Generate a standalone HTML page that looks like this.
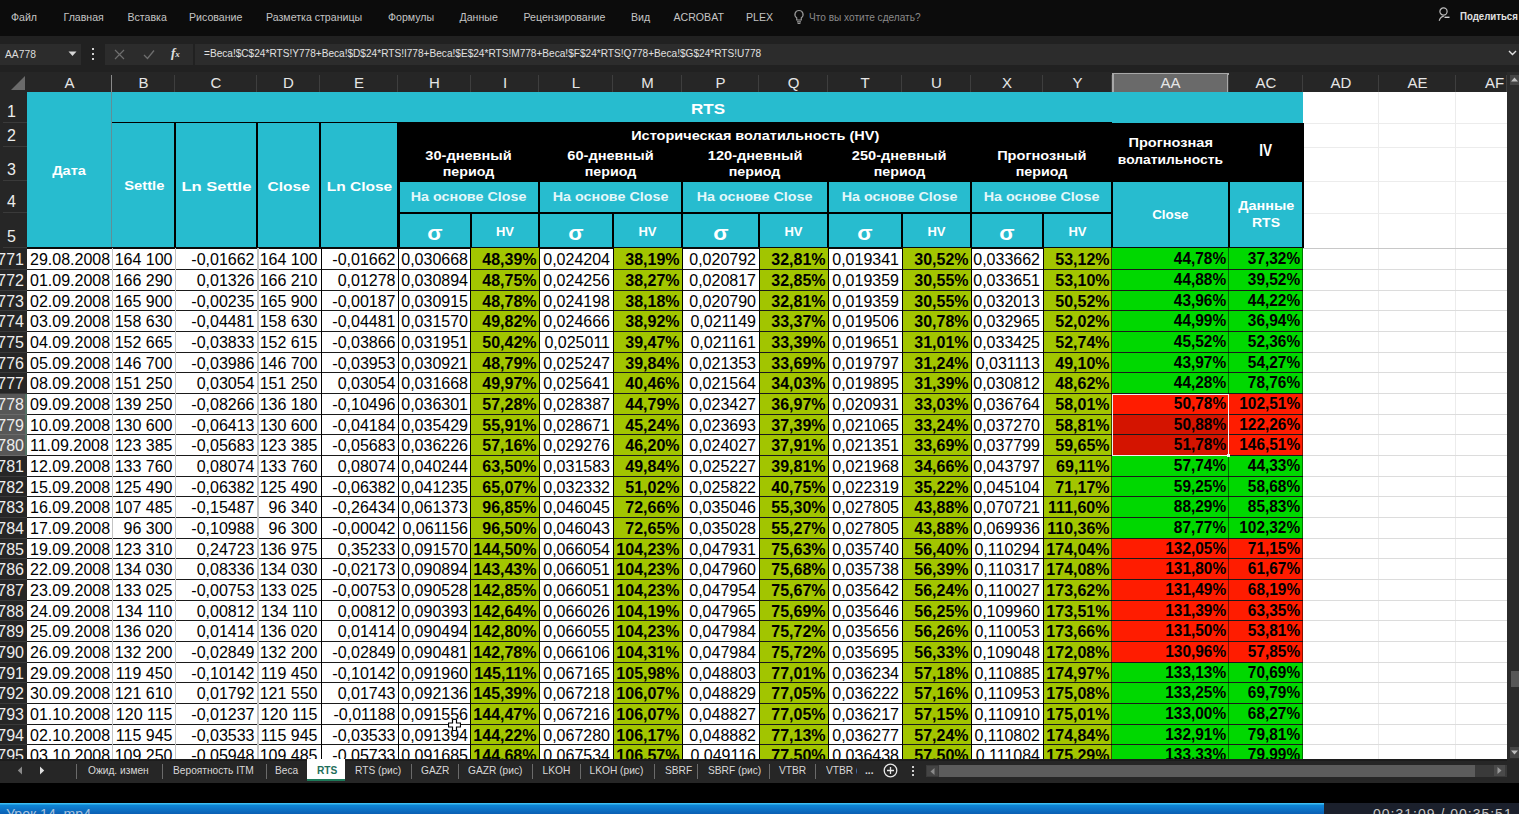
<!DOCTYPE html><html><head><meta charset="utf-8"><style>
*{margin:0;padding:0}
html,body{width:1519px;height:814px;overflow:hidden;background:#000}
body{position:relative;font-family:"Liberation Sans",sans-serif}
.a{position:absolute}
.mt{font-size:10.6px;color:#c4c4c4;white-space:nowrap}
.ch{font-size:15px;color:#e6e6e6;text-align:center;line-height:19px}
.rh{font-size:15px;color:#ececec;text-align:center;white-space:nowrap}
.hd{color:#fff;font-weight:bold;text-align:center;white-space:nowrap}
.dt{font-size:16px;color:#000;white-space:nowrap;overflow:hidden}
.b{font-weight:bold}
.tb{font-size:10.2px;color:#d8d8d8;white-space:nowrap}
</style></head><body><div class="a" style="left:0;top:0;width:1519px;height:36px;background:#0c0c0c"></div>
<div class="a mt" style="left:11px;top:11px">Файл</div>
<div class="a mt" style="left:63.5px;top:11px">Главная</div>
<div class="a mt" style="left:127.5px;top:11px">Вставка</div>
<div class="a mt" style="left:189px;top:11px">Рисование</div>
<div class="a mt" style="left:266px;top:11px">Разметка страницы</div>
<div class="a mt" style="left:388px;top:11px">Формулы</div>
<div class="a mt" style="left:459.5px;top:11px">Данные</div>
<div class="a mt" style="left:523.5px;top:11px">Рецензирование</div>
<div class="a mt" style="left:631px;top:11px">Вид</div>
<div class="a mt" style="left:673.5px;top:11px">ACROBAT</div>
<div class="a mt" style="left:746px;top:11px">PLEX</div>
<div class="a mt" style="left:809px;top:12px;color:#8a8a8a;font-size:10.1px">Что вы хотите сделать?</div>
<svg class="a" style="left:793px;top:9px" width="12" height="16" viewBox="0 0 12 16"><path d="M6 1.5a4 4 0 0 0-2.3 7.3V11h4.6V8.8A4 4 0 0 0 6 1.5z" fill="none" stroke="#9a9a9a" stroke-width="1.2"/><path d="M4 12.8h4M4.6 14.5h2.8" stroke="#9a9a9a" stroke-width="1.2"/></svg>
<svg class="a" style="left:1438px;top:6px" width="14" height="18" viewBox="0 0 14 18"><circle cx="5.5" cy="5.5" r="3.6" fill="none" stroke="#bdbdbd" stroke-width="1.2"/><path d="M1.2 14.8c0.8-2.6 2.6-4.4 4.6-4.4" fill="none" stroke="#bdbdbd" stroke-width="1.2"/><path d="M6.5 11.3h5" stroke="#d0d0d0" stroke-width="1.4"/></svg>
<div class="a mt" style="left:1460px;top:9.5px;color:#e0e0e0;font-size:10.6px;font-weight:bold;transform:scaleX(0.91);transform-origin:0 0">Поделиться</div>
<div class="a" style="left:0;top:36px;width:1519px;height:36px;background:#212121"></div>
<div class="a" style="left:0px;top:44px;width:81px;height:21px;background:#2c2c2c"></div>
<div class="a" style="left:5px;top:48.5px;font-size:10.3px;color:#dcdcdc">AA778</div>
<svg class="a" style="left:68px;top:51px" width="9" height="6" viewBox="0 0 9 6"><path d="M0.5 0.5h8L4.5 5z" fill="#d8d8d8"/></svg>
<div class="a" style="left:92px;top:48px;width:2px;height:2px;background:#cfcfcf;box-shadow:0 5px 0 #cfcfcf,0 10px 0 #cfcfcf"></div>
<div class="a" style="left:105px;top:44px;width:88px;height:21px;background:#2c2c2c"></div>
<svg class="a" style="left:114px;top:49px" width="11" height="11" viewBox="0 0 11 11"><path d="M1 1l9 9M10 1l-9 9" stroke="#6e6e6e" stroke-width="1.2"/></svg>
<svg class="a" style="left:143px;top:49px" width="12" height="11" viewBox="0 0 12 11"><path d="M1 6l3.5 3.5L11 1.5" fill="none" stroke="#6e6e6e" stroke-width="1.3"/></svg>
<div class="a" style="left:171px;top:45px;font-family:'Liberation Serif',serif;font-style:italic;font-weight:bold;font-size:13px;color:#e0e0e0">f<span style="font-size:9px">x</span></div>
<div class="a" style="left:195px;top:44px;width:1324px;height:21px;background:#2c2c2c"></div>
<div class="a" style="left:204px;top:48px;font-size:10.1px;color:#e0e0e0;white-space:nowrap">=Веса!$C$24*RTS!Y778+Веса!$D$24*RTS!I778+Веса!$E$24*RTS!M778+Веса!$F$24*RTS!Q778+Веса!$G$24*RTS!U778</div>
<svg class="a" style="left:1508px;top:50px" width="9" height="6" viewBox="0 0 9 6"><path d="M1 1l3.5 3.5L8 1" fill="none" stroke="#e0e0e0" stroke-width="1.4"/></svg>
<div class="a" style="left:0px;top:72px;width:1519px;height:20px;background:#262626"></div>
<div class="a ch" style="left:27px;top:73px;width:85px">A</div>
<div class="a" style="left:111px;top:75px;width:1px;height:17px;background:#8a8a8a"></div>
<div class="a ch" style="left:112px;top:73px;width:63px">B</div>
<div class="a" style="left:174px;top:75px;width:1px;height:17px;background:#3e3e3e"></div>
<div class="a ch" style="left:175px;top:73px;width:82px">C</div>
<div class="a" style="left:256px;top:75px;width:1px;height:17px;background:#3e3e3e"></div>
<div class="a ch" style="left:257px;top:73px;width:63px">D</div>
<div class="a" style="left:319px;top:75px;width:1px;height:17px;background:#3e3e3e"></div>
<div class="a ch" style="left:320px;top:73px;width:78px">E</div>
<div class="a" style="left:397px;top:75px;width:1px;height:17px;background:#3e3e3e"></div>
<div class="a ch" style="left:398px;top:73px;width:73px">H</div>
<div class="a" style="left:470px;top:75px;width:1px;height:17px;background:#3e3e3e"></div>
<div class="a ch" style="left:471px;top:73px;width:68px">I</div>
<div class="a" style="left:538px;top:75px;width:1px;height:17px;background:#3e3e3e"></div>
<div class="a ch" style="left:539px;top:73px;width:74px">L</div>
<div class="a" style="left:612px;top:75px;width:1px;height:17px;background:#3e3e3e"></div>
<div class="a ch" style="left:613px;top:73px;width:69px">M</div>
<div class="a" style="left:681px;top:75px;width:1px;height:17px;background:#3e3e3e"></div>
<div class="a ch" style="left:682px;top:73px;width:77px">P</div>
<div class="a" style="left:758px;top:75px;width:1px;height:17px;background:#3e3e3e"></div>
<div class="a ch" style="left:759px;top:73px;width:69px">Q</div>
<div class="a" style="left:827px;top:75px;width:1px;height:17px;background:#3e3e3e"></div>
<div class="a ch" style="left:828px;top:73px;width:74px">T</div>
<div class="a" style="left:901px;top:75px;width:1px;height:17px;background:#3e3e3e"></div>
<div class="a ch" style="left:902px;top:73px;width:69px">U</div>
<div class="a" style="left:970px;top:75px;width:1px;height:17px;background:#3e3e3e"></div>
<div class="a ch" style="left:971px;top:73px;width:72px">X</div>
<div class="a" style="left:1042px;top:75px;width:1px;height:17px;background:#3e3e3e"></div>
<div class="a ch" style="left:1043px;top:73px;width:69px">Y</div>
<div class="a" style="left:1111px;top:75px;width:1px;height:17px;background:#3e3e3e"></div>
<div class="a" style="left:1112px;top:73px;width:117px;height:19px;background:#6a6a6a;box-shadow:inset 2px 0 0 #a8a8a8,inset -2px 0 0 #a8a8a8,inset 0 1px 0 #a8a8a8"></div>
<div class="a ch" style="left:1112px;top:73px;width:117px">AA</div>
<div class="a" style="left:1228px;top:75px;width:1px;height:17px;background:#3e3e3e"></div>
<div class="a ch" style="left:1229px;top:73px;width:74px">AC</div>
<div class="a" style="left:1302px;top:75px;width:1px;height:17px;background:#3e3e3e"></div>
<div class="a ch" style="left:1303px;top:73px;width:76px">AD</div>
<div class="a" style="left:1378px;top:75px;width:1px;height:17px;background:#3e3e3e"></div>
<div class="a ch" style="left:1379px;top:73px;width:77px">AE</div>
<div class="a" style="left:1455px;top:75px;width:1px;height:17px;background:#3e3e3e"></div>
<div class="a ch" style="left:1456px;top:73px;width:77px">AF</div>
<div class="a" style="left:1506px;top:75px;width:1px;height:17px;background:#3e3e3e"></div>
<svg class="a" style="left:11px;top:76px" width="14" height="14" viewBox="0 0 14 14"><path d="M14 0V14H0z" fill="#6a6a6a"/></svg>
<div class="a" style="left:0px;top:92px;width:27px;height:667px;background:#262626"></div>
<div class="a rh" style="left:-1px;top:101.5px;width:25px;height:20px;line-height:20px;font-size:16px">1</div>
<div class="a" style="left:3px;top:122px;width:24px;height:1px;background:#3a3a3a"></div>
<div class="a rh" style="left:-1px;top:125.5px;width:25px;height:20px;line-height:20px;font-size:16px">2</div>
<div class="a" style="left:3px;top:146px;width:24px;height:1px;background:#3a3a3a"></div>
<div class="a rh" style="left:-1px;top:159.5px;width:25px;height:20px;line-height:20px;font-size:16px">3</div>
<div class="a" style="left:3px;top:180px;width:24px;height:1px;background:#3a3a3a"></div>
<div class="a rh" style="left:-1px;top:191.5px;width:25px;height:20px;line-height:20px;font-size:16px">4</div>
<div class="a" style="left:3px;top:212px;width:24px;height:1px;background:#3a3a3a"></div>
<div class="a rh" style="left:-1px;top:226.5px;width:25px;height:20px;line-height:20px;font-size:16px">5</div>
<div class="a" style="left:3px;top:247px;width:24px;height:1px;background:#3a3a3a"></div>
<div class="a" style="left:0px;top:393.09px;width:27px;height:62.01px;background:#575757"></div>
<div class="a" style="left:25px;top:393.09px;width:2px;height:62.01px;background:#4f6f62"></div>
<div class="a rh" style="left:-9px;top:250.30px;width:33px;height:20.67px;line-height:20.67px;text-align:right;font-size:16px">771</div>
<div class="a" style="left:0;top:269.07px;width:27px;height:1px;background:#3a3a3a"></div>
<div class="a rh" style="left:-9px;top:270.97px;width:33px;height:20.67px;line-height:20.67px;text-align:right;font-size:16px">772</div>
<div class="a" style="left:0;top:289.74px;width:27px;height:1px;background:#3a3a3a"></div>
<div class="a rh" style="left:-9px;top:291.63px;width:33px;height:20.67px;line-height:20.67px;text-align:right;font-size:16px">773</div>
<div class="a" style="left:0;top:310.41px;width:27px;height:1px;background:#3a3a3a"></div>
<div class="a rh" style="left:-9px;top:312.30px;width:33px;height:20.67px;line-height:20.67px;text-align:right;font-size:16px">774</div>
<div class="a" style="left:0;top:331.08px;width:27px;height:1px;background:#3a3a3a"></div>
<div class="a rh" style="left:-9px;top:332.96px;width:33px;height:20.67px;line-height:20.67px;text-align:right;font-size:16px">775</div>
<div class="a" style="left:0;top:351.75px;width:27px;height:1px;background:#3a3a3a"></div>
<div class="a rh" style="left:-9px;top:353.62px;width:33px;height:20.67px;line-height:20.67px;text-align:right;font-size:16px">776</div>
<div class="a" style="left:0;top:372.42px;width:27px;height:1px;background:#3a3a3a"></div>
<div class="a rh" style="left:-9px;top:374.29px;width:33px;height:20.67px;line-height:20.67px;text-align:right;font-size:16px">777</div>
<div class="a" style="left:0;top:393.09px;width:27px;height:1px;background:#3a3a3a"></div>
<div class="a rh" style="left:-9px;top:394.96px;width:33px;height:20.67px;line-height:20.67px;text-align:right;font-size:16px">778</div>
<div class="a" style="left:0;top:413.76px;width:27px;height:1px;background:#6a6a6a"></div>
<div class="a rh" style="left:-9px;top:415.62px;width:33px;height:20.67px;line-height:20.67px;text-align:right;font-size:16px">779</div>
<div class="a" style="left:0;top:434.43px;width:27px;height:1px;background:#6a6a6a"></div>
<div class="a rh" style="left:-9px;top:436.28px;width:33px;height:20.67px;line-height:20.67px;text-align:right;font-size:16px">780</div>
<div class="a" style="left:0;top:455.10px;width:27px;height:1px;background:#6a6a6a"></div>
<div class="a rh" style="left:-9px;top:456.95px;width:33px;height:20.67px;line-height:20.67px;text-align:right;font-size:16px">781</div>
<div class="a" style="left:0;top:475.77px;width:27px;height:1px;background:#3a3a3a"></div>
<div class="a rh" style="left:-9px;top:477.62px;width:33px;height:20.67px;line-height:20.67px;text-align:right;font-size:16px">782</div>
<div class="a" style="left:0;top:496.44px;width:27px;height:1px;background:#3a3a3a"></div>
<div class="a rh" style="left:-9px;top:498.28px;width:33px;height:20.67px;line-height:20.67px;text-align:right;font-size:16px">783</div>
<div class="a" style="left:0;top:517.11px;width:27px;height:1px;background:#3a3a3a"></div>
<div class="a rh" style="left:-9px;top:518.94px;width:33px;height:20.67px;line-height:20.67px;text-align:right;font-size:16px">784</div>
<div class="a" style="left:0;top:537.78px;width:27px;height:1px;background:#3a3a3a"></div>
<div class="a rh" style="left:-9px;top:539.61px;width:33px;height:20.67px;line-height:20.67px;text-align:right;font-size:16px">785</div>
<div class="a" style="left:0;top:558.45px;width:27px;height:1px;background:#3a3a3a"></div>
<div class="a rh" style="left:-9px;top:560.27px;width:33px;height:20.67px;line-height:20.67px;text-align:right;font-size:16px">786</div>
<div class="a" style="left:0;top:579.12px;width:27px;height:1px;background:#3a3a3a"></div>
<div class="a rh" style="left:-9px;top:580.94px;width:33px;height:20.67px;line-height:20.67px;text-align:right;font-size:16px">787</div>
<div class="a" style="left:0;top:599.79px;width:27px;height:1px;background:#3a3a3a"></div>
<div class="a rh" style="left:-9px;top:601.61px;width:33px;height:20.67px;line-height:20.67px;text-align:right;font-size:16px">788</div>
<div class="a" style="left:0;top:620.46px;width:27px;height:1px;background:#3a3a3a"></div>
<div class="a rh" style="left:-9px;top:622.27px;width:33px;height:20.67px;line-height:20.67px;text-align:right;font-size:16px">789</div>
<div class="a" style="left:0;top:641.13px;width:27px;height:1px;background:#3a3a3a"></div>
<div class="a rh" style="left:-9px;top:642.93px;width:33px;height:20.67px;line-height:20.67px;text-align:right;font-size:16px">790</div>
<div class="a" style="left:0;top:661.80px;width:27px;height:1px;background:#3a3a3a"></div>
<div class="a rh" style="left:-9px;top:663.60px;width:33px;height:20.67px;line-height:20.67px;text-align:right;font-size:16px">791</div>
<div class="a" style="left:0;top:682.47px;width:27px;height:1px;background:#3a3a3a"></div>
<div class="a rh" style="left:-9px;top:684.26px;width:33px;height:20.67px;line-height:20.67px;text-align:right;font-size:16px">792</div>
<div class="a" style="left:0;top:703.14px;width:27px;height:1px;background:#3a3a3a"></div>
<div class="a rh" style="left:-9px;top:704.93px;width:33px;height:20.67px;line-height:20.67px;text-align:right;font-size:16px">793</div>
<div class="a" style="left:0;top:723.81px;width:27px;height:1px;background:#3a3a3a"></div>
<div class="a rh" style="left:-9px;top:725.60px;width:33px;height:20.67px;line-height:20.67px;text-align:right;font-size:16px">794</div>
<div class="a" style="left:0;top:744.48px;width:27px;height:1px;background:#3a3a3a"></div>
<div class="a rh" style="left:-9px;top:746.26px;width:33px;height:20.67px;line-height:20.67px;text-align:right;font-size:16px">795</div>
<div class="a" style="left:0;top:765.15px;width:27px;height:1px;background:#3a3a3a"></div>
<div class="a" style="left:27px;top:92px;width:1480px;height:667px;background:#ffffff"></div>
<div class="a" style="left:1303px;top:122.5px;width:204px;height:1px;background:#ececec"></div>
<div class="a" style="left:1303px;top:146.5px;width:204px;height:1px;background:#ececec"></div>
<div class="a" style="left:1303px;top:180.5px;width:204px;height:1px;background:#ececec"></div>
<div class="a" style="left:1303px;top:213px;width:204px;height:1px;background:#ececec"></div>
<div class="a" style="left:1378px;top:92px;width:1px;height:667px;background:#ececec"></div>
<div class="a" style="left:1455px;top:92px;width:1px;height:667px;background:#ececec"></div>
<div class="a" style="left:1303px;top:269.07px;width:204px;height:1px;background:#dcdcdc"></div>
<div class="a" style="left:1303px;top:289.74px;width:204px;height:1px;background:#dcdcdc"></div>
<div class="a" style="left:1303px;top:310.41px;width:204px;height:1px;background:#dcdcdc"></div>
<div class="a" style="left:1303px;top:331.08px;width:204px;height:1px;background:#dcdcdc"></div>
<div class="a" style="left:1303px;top:351.75px;width:204px;height:1px;background:#dcdcdc"></div>
<div class="a" style="left:1303px;top:372.42px;width:204px;height:1px;background:#dcdcdc"></div>
<div class="a" style="left:1303px;top:393.09px;width:204px;height:1px;background:#dcdcdc"></div>
<div class="a" style="left:1303px;top:413.76px;width:204px;height:1px;background:#dcdcdc"></div>
<div class="a" style="left:1303px;top:434.43px;width:204px;height:1px;background:#dcdcdc"></div>
<div class="a" style="left:1303px;top:455.1px;width:204px;height:1px;background:#dcdcdc"></div>
<div class="a" style="left:1303px;top:475.77px;width:204px;height:1px;background:#dcdcdc"></div>
<div class="a" style="left:1303px;top:496.44px;width:204px;height:1px;background:#dcdcdc"></div>
<div class="a" style="left:1303px;top:517.11px;width:204px;height:1px;background:#dcdcdc"></div>
<div class="a" style="left:1303px;top:537.78px;width:204px;height:1px;background:#dcdcdc"></div>
<div class="a" style="left:1303px;top:558.45px;width:204px;height:1px;background:#dcdcdc"></div>
<div class="a" style="left:1303px;top:579.12px;width:204px;height:1px;background:#dcdcdc"></div>
<div class="a" style="left:1303px;top:599.79px;width:204px;height:1px;background:#dcdcdc"></div>
<div class="a" style="left:1303px;top:620.46px;width:204px;height:1px;background:#dcdcdc"></div>
<div class="a" style="left:1303px;top:641.13px;width:204px;height:1px;background:#dcdcdc"></div>
<div class="a" style="left:1303px;top:661.8px;width:204px;height:1px;background:#dcdcdc"></div>
<div class="a" style="left:1303px;top:682.47px;width:204px;height:1px;background:#dcdcdc"></div>
<div class="a" style="left:1303px;top:703.14px;width:204px;height:1px;background:#dcdcdc"></div>
<div class="a" style="left:1303px;top:723.81px;width:204px;height:1px;background:#dcdcdc"></div>
<div class="a" style="left:1303px;top:744.48px;width:204px;height:1px;background:#dcdcdc"></div>
<div class="a" style="left:1303px;top:765.15px;width:204px;height:1px;background:#dcdcdc"></div>
<div class="a" style="left:1303px;top:248px;width:204px;height:1px;background:#c8c8c8"></div>
<div class="a " style="left:27px;top:92px;width:1276px;height:156px;background:#27bccf;"></div>
<div class="a " style="left:398px;top:123px;width:905px;height:58px;background:#000;"></div>
<div class="a hd" style="left:-80.9px;top:164.00px;width:300px;font-size:13px;line-height:13px;color:#fff"><span style="display:inline-block;transform:scaleX(1.117)">Дата</span></div>
<div class="a hd" style="left:557.8px;top:100.50px;width:300px;font-size:15px;line-height:15px;color:#fff"><span style="display:inline-block;transform:scaleX(1.134)">RTS</span></div>
<div class="a hd" style="left:-5.699999999999989px;top:180.44px;width:300px;font-size:12px;line-height:12px;color:#fff"><span style="display:inline-block;transform:scaleX(1.227)">Settle</span></div>
<div class="a hd" style="left:66.6px;top:179.60px;width:300px;font-size:13px;line-height:13px;color:#fff"><span style="display:inline-block;transform:scaleX(1.275)">Ln Settle</span></div>
<div class="a hd" style="left:138.89999999999998px;top:179.60px;width:300px;font-size:13px;line-height:13px;color:#fff"><span style="display:inline-block;transform:scaleX(1.198)">Close</span></div>
<div class="a hd" style="left:209.5px;top:179.60px;width:300px;font-size:13px;line-height:13px;color:#fff"><span style="display:inline-block;transform:scaleX(1.193)">Ln Close</span></div>
<div class="a hd" style="left:605.5px;top:128.80px;width:300px;font-size:13px;line-height:13px;color:#fff"><span style="display:inline-block;transform:scaleX(1.115)">Историческая волатильность (HV)</span></div>
<div class="a hd" style="left:318.5px;top:149.20px;width:300px;font-size:13px;line-height:13px;color:#fff"><span style="display:inline-block;transform:scaleX(1.122)">30-дневный</span></div>
<div class="a hd" style="left:318.5px;top:165.30px;width:300px;font-size:13px;line-height:13px;color:#fff"><span style="display:inline-block;transform:scaleX(1.095)">период</span></div>
<div class="a hd" style="left:318.5px;top:190.40px;width:300px;font-size:13px;line-height:13px;color:#e4f7fa"><span style="display:inline-block;transform:scaleX(1.101)">На основе Close</span></div>
<div class="a hd" style="left:284.5px;top:222.57px;width:300px;font-size:20px;line-height:20px;color:#fff"><span style="display:inline-block;transform:scaleX(1.118)">σ</span></div>
<div class="a hd" style="left:355.0px;top:224.50px;width:300px;font-size:13px;line-height:13px;color:#fff"><span style="display:inline-block;transform:scaleX(1.0)">HV</span></div>
<div class="a hd" style="left:460.5px;top:149.20px;width:300px;font-size:13px;line-height:13px;color:#fff"><span style="display:inline-block;transform:scaleX(1.122)">60-дневный</span></div>
<div class="a hd" style="left:460.5px;top:165.30px;width:300px;font-size:13px;line-height:13px;color:#fff"><span style="display:inline-block;transform:scaleX(1.095)">период</span></div>
<div class="a hd" style="left:460.5px;top:190.40px;width:300px;font-size:13px;line-height:13px;color:#e4f7fa"><span style="display:inline-block;transform:scaleX(1.101)">На основе Close</span></div>
<div class="a hd" style="left:426.0px;top:222.57px;width:300px;font-size:20px;line-height:20px;color:#fff"><span style="display:inline-block;transform:scaleX(1.118)">σ</span></div>
<div class="a hd" style="left:497.5px;top:224.50px;width:300px;font-size:13px;line-height:13px;color:#fff"><span style="display:inline-block;transform:scaleX(1.0)">HV</span></div>
<div class="a hd" style="left:605.0px;top:149.20px;width:300px;font-size:13px;line-height:13px;color:#fff"><span style="display:inline-block;transform:scaleX(1.122)">120-дневный</span></div>
<div class="a hd" style="left:605.0px;top:165.30px;width:300px;font-size:13px;line-height:13px;color:#fff"><span style="display:inline-block;transform:scaleX(1.095)">период</span></div>
<div class="a hd" style="left:605.0px;top:190.40px;width:300px;font-size:13px;line-height:13px;color:#e4f7fa"><span style="display:inline-block;transform:scaleX(1.101)">На основе Close</span></div>
<div class="a hd" style="left:570.5px;top:222.57px;width:300px;font-size:20px;line-height:20px;color:#fff"><span style="display:inline-block;transform:scaleX(1.118)">σ</span></div>
<div class="a hd" style="left:643.5px;top:224.50px;width:300px;font-size:13px;line-height:13px;color:#fff"><span style="display:inline-block;transform:scaleX(1.0)">HV</span></div>
<div class="a hd" style="left:749.5px;top:149.20px;width:300px;font-size:13px;line-height:13px;color:#fff"><span style="display:inline-block;transform:scaleX(1.122)">250-дневный</span></div>
<div class="a hd" style="left:749.5px;top:165.30px;width:300px;font-size:13px;line-height:13px;color:#fff"><span style="display:inline-block;transform:scaleX(1.095)">период</span></div>
<div class="a hd" style="left:749.5px;top:190.40px;width:300px;font-size:13px;line-height:13px;color:#e4f7fa"><span style="display:inline-block;transform:scaleX(1.101)">На основе Close</span></div>
<div class="a hd" style="left:715.0px;top:222.57px;width:300px;font-size:20px;line-height:20px;color:#fff"><span style="display:inline-block;transform:scaleX(1.118)">σ</span></div>
<div class="a hd" style="left:786.5px;top:224.50px;width:300px;font-size:13px;line-height:13px;color:#fff"><span style="display:inline-block;transform:scaleX(1.0)">HV</span></div>
<div class="a hd" style="left:891.5px;top:149.20px;width:300px;font-size:13px;line-height:13px;color:#fff"><span style="display:inline-block;transform:scaleX(1.122)">Прогнозный</span></div>
<div class="a hd" style="left:891.5px;top:165.30px;width:300px;font-size:13px;line-height:13px;color:#fff"><span style="display:inline-block;transform:scaleX(1.095)">период</span></div>
<div class="a hd" style="left:891.5px;top:190.40px;width:300px;font-size:13px;line-height:13px;color:#e4f7fa"><span style="display:inline-block;transform:scaleX(1.101)">На основе Close</span></div>
<div class="a hd" style="left:857.0px;top:222.57px;width:300px;font-size:20px;line-height:20px;color:#fff"><span style="display:inline-block;transform:scaleX(1.118)">σ</span></div>
<div class="a hd" style="left:927.5px;top:224.50px;width:300px;font-size:13px;line-height:13px;color:#fff"><span style="display:inline-block;transform:scaleX(1.0)">HV</span></div>
<div class="a hd" style="left:1020.5px;top:136.30px;width:300px;font-size:13px;line-height:13px;color:#fff"><span style="display:inline-block;transform:scaleX(1.122)">Прогнозная</span></div>
<div class="a hd" style="left:1020.5px;top:152.60px;width:300px;font-size:13px;line-height:13px;color:#fff"><span style="display:inline-block;transform:scaleX(1.064)">волатильность</span></div>
<div class="a hd" style="left:1020.5px;top:208.54px;width:300px;font-size:12px;line-height:12px;color:#fff"><span style="display:inline-block;transform:scaleX(1.114)">Close</span></div>
<div class="a hd" style="left:1116.0px;top:143.16px;width:300px;font-size:16px;line-height:16px;color:#fff"><span style="display:inline-block;transform:scaleX(0.85)">IV</span></div>
<div class="a hd" style="left:1116.0px;top:199.30px;width:300px;font-size:13px;line-height:13px;color:#fff"><span style="display:inline-block;transform:scaleX(1.106)">Данные</span></div>
<div class="a hd" style="left:1116.0px;top:215.50px;width:300px;font-size:13px;line-height:13px;color:#fff"><span style="display:inline-block;transform:scaleX(1.077)">RTS</span></div>
<div class="a" style="left:112px;top:121.5px;width:1000px;height:1.6px;background:#000"></div>
<div class="a" style="left:1112px;top:123px;width:191px;height:1.6px;background:#000"></div>
<div class="a" style="left:111.3px;top:92px;width:1.2px;height:156px;background:#5f8f98"></div>
<div class="a" style="left:174px;top:123px;width:2px;height:125px;background:#000"></div>
<div class="a" style="left:256px;top:123px;width:2px;height:125px;background:#000"></div>
<div class="a" style="left:319px;top:123px;width:2px;height:125px;background:#000"></div>
<div class="a" style="left:397px;top:123px;width:2px;height:125px;background:#000"></div>
<div class="a" style="left:398px;top:123px;width:2px;height:125px;background:#000"></div>
<div class="a" style="left:398px;top:180px;width:714px;height:2px;background:#000"></div>
<div class="a" style="left:1112px;top:180px;width:191px;height:2px;background:#000"></div>
<div class="a" style="left:398px;top:212px;width:714px;height:2px;background:#000"></div>
<div class="a" style="left:538px;top:181px;width:2px;height:67px;background:#000"></div>
<div class="a" style="left:470px;top:213px;width:2px;height:35px;background:#000"></div>
<div class="a" style="left:681px;top:181px;width:2px;height:67px;background:#000"></div>
<div class="a" style="left:612px;top:213px;width:2px;height:35px;background:#000"></div>
<div class="a" style="left:827px;top:181px;width:2px;height:67px;background:#000"></div>
<div class="a" style="left:758px;top:213px;width:2px;height:35px;background:#000"></div>
<div class="a" style="left:970px;top:181px;width:2px;height:67px;background:#000"></div>
<div class="a" style="left:901px;top:213px;width:2px;height:35px;background:#000"></div>
<div class="a" style="left:1111px;top:181px;width:2px;height:67px;background:#000"></div>
<div class="a" style="left:1042px;top:213px;width:2px;height:35px;background:#000"></div>
<div class="a" style="left:1228px;top:181px;width:2px;height:67px;background:#000"></div>
<div class="a" style="left:1302px;top:123px;width:1.5px;height:125px;background:#000"></div>
<div class="a" style="left:27px;top:247px;width:1276px;height:2px;background:#0a0a0a"></div>
<div class="a dt" style="left:27px;top:250.30px;width:85px;height:20.67px;line-height:20.67px;text-align:left;padding-left:3px;box-sizing:border-box;">29.08.2008</div>
<div class="a dt" style="left:112px;top:250.30px;width:63px;height:20.67px;line-height:20.67px;text-align:right;padding-right:2.5px;box-sizing:border-box;">164 100</div>
<div class="a dt" style="left:175px;top:250.30px;width:82px;height:20.67px;line-height:20.67px;text-align:right;padding-right:2.5px;box-sizing:border-box;">-0,01662</div>
<div class="a dt" style="left:257px;top:250.30px;width:63px;height:20.67px;line-height:20.67px;text-align:right;padding-right:2.5px;box-sizing:border-box;">164 100</div>
<div class="a dt" style="left:320px;top:250.30px;width:78px;height:20.67px;line-height:20.67px;text-align:right;padding-right:2.5px;box-sizing:border-box;">-0,01662</div>
<div class="a dt" style="left:398px;top:250.30px;width:73px;height:20.67px;line-height:20.67px;text-align:right;padding-right:3px;box-sizing:border-box;">0,030668</div>
<div class="a" style="left:471px;top:248.40px;width:68px;height:20.67px;background:#a2c500"></div>
<div class="a dt b" style="left:471px;top:250.30px;width:68px;height:20.67px;line-height:20.67px;text-align:right;padding-right:2.5px;box-sizing:border-box;">48,39%</div>
<div class="a dt" style="left:539px;top:250.30px;width:74px;height:20.67px;line-height:20.67px;text-align:right;padding-right:3px;box-sizing:border-box;">0,024204</div>
<div class="a" style="left:613px;top:248.40px;width:69px;height:20.67px;background:#a2c500"></div>
<div class="a dt b" style="left:613px;top:250.30px;width:69px;height:20.67px;line-height:20.67px;text-align:right;padding-right:2.5px;box-sizing:border-box;">38,19%</div>
<div class="a dt" style="left:682px;top:250.30px;width:77px;height:20.67px;line-height:20.67px;text-align:right;padding-right:3px;box-sizing:border-box;">0,020792</div>
<div class="a" style="left:759px;top:248.40px;width:69px;height:20.67px;background:#a2c500"></div>
<div class="a dt b" style="left:759px;top:250.30px;width:69px;height:20.67px;line-height:20.67px;text-align:right;padding-right:2.5px;box-sizing:border-box;">32,81%</div>
<div class="a dt" style="left:828px;top:250.30px;width:74px;height:20.67px;line-height:20.67px;text-align:right;padding-right:3px;box-sizing:border-box;">0,019341</div>
<div class="a" style="left:902px;top:248.40px;width:69px;height:20.67px;background:#a2c500"></div>
<div class="a dt b" style="left:902px;top:250.30px;width:69px;height:20.67px;line-height:20.67px;text-align:right;padding-right:2.5px;box-sizing:border-box;">30,52%</div>
<div class="a dt" style="left:971px;top:250.30px;width:72px;height:20.67px;line-height:20.67px;text-align:right;padding-right:3px;box-sizing:border-box;">0,033662</div>
<div class="a" style="left:1043px;top:248.40px;width:69px;height:20.67px;background:#a2c500"></div>
<div class="a dt b" style="left:1043px;top:250.30px;width:69px;height:20.67px;line-height:20.67px;text-align:right;padding-right:2.5px;box-sizing:border-box;">53,12%</div>
<div class="a" style="left:1112px;top:248.40px;width:117px;height:20.67px;background:#00d800"></div>
<div class="a dt b" style="left:1112px;top:249.30px;width:117px;height:20.67px;line-height:20.67px;transform:scaleX(0.963);transform-origin:100% 50%;text-align:right;padding-right:3px;box-sizing:border-box;">44,78%</div>
<div class="a" style="left:1229px;top:248.40px;width:74px;height:20.67px;background:#00d800"></div>
<div class="a dt b" style="left:1229px;top:249.30px;width:74px;height:20.67px;line-height:20.67px;transform:scaleX(0.963);transform-origin:100% 50%;text-align:right;padding-right:3px;box-sizing:border-box;">37,32%</div>
<div class="a dt" style="left:27px;top:270.97px;width:85px;height:20.67px;line-height:20.67px;text-align:left;padding-left:3px;box-sizing:border-box;">01.09.2008</div>
<div class="a dt" style="left:112px;top:270.97px;width:63px;height:20.67px;line-height:20.67px;text-align:right;padding-right:2.5px;box-sizing:border-box;">166 290</div>
<div class="a dt" style="left:175px;top:270.97px;width:82px;height:20.67px;line-height:20.67px;text-align:right;padding-right:2.5px;box-sizing:border-box;">0,01326</div>
<div class="a dt" style="left:257px;top:270.97px;width:63px;height:20.67px;line-height:20.67px;text-align:right;padding-right:2.5px;box-sizing:border-box;">166 210</div>
<div class="a dt" style="left:320px;top:270.97px;width:78px;height:20.67px;line-height:20.67px;text-align:right;padding-right:2.5px;box-sizing:border-box;">0,01278</div>
<div class="a dt" style="left:398px;top:270.97px;width:73px;height:20.67px;line-height:20.67px;text-align:right;padding-right:3px;box-sizing:border-box;">0,030894</div>
<div class="a" style="left:471px;top:269.07px;width:68px;height:20.67px;background:#a2c500"></div>
<div class="a dt b" style="left:471px;top:270.97px;width:68px;height:20.67px;line-height:20.67px;text-align:right;padding-right:2.5px;box-sizing:border-box;">48,75%</div>
<div class="a dt" style="left:539px;top:270.97px;width:74px;height:20.67px;line-height:20.67px;text-align:right;padding-right:3px;box-sizing:border-box;">0,024256</div>
<div class="a" style="left:613px;top:269.07px;width:69px;height:20.67px;background:#a2c500"></div>
<div class="a dt b" style="left:613px;top:270.97px;width:69px;height:20.67px;line-height:20.67px;text-align:right;padding-right:2.5px;box-sizing:border-box;">38,27%</div>
<div class="a dt" style="left:682px;top:270.97px;width:77px;height:20.67px;line-height:20.67px;text-align:right;padding-right:3px;box-sizing:border-box;">0,020817</div>
<div class="a" style="left:759px;top:269.07px;width:69px;height:20.67px;background:#a2c500"></div>
<div class="a dt b" style="left:759px;top:270.97px;width:69px;height:20.67px;line-height:20.67px;text-align:right;padding-right:2.5px;box-sizing:border-box;">32,85%</div>
<div class="a dt" style="left:828px;top:270.97px;width:74px;height:20.67px;line-height:20.67px;text-align:right;padding-right:3px;box-sizing:border-box;">0,019359</div>
<div class="a" style="left:902px;top:269.07px;width:69px;height:20.67px;background:#a2c500"></div>
<div class="a dt b" style="left:902px;top:270.97px;width:69px;height:20.67px;line-height:20.67px;text-align:right;padding-right:2.5px;box-sizing:border-box;">30,55%</div>
<div class="a dt" style="left:971px;top:270.97px;width:72px;height:20.67px;line-height:20.67px;text-align:right;padding-right:3px;box-sizing:border-box;">0,033651</div>
<div class="a" style="left:1043px;top:269.07px;width:69px;height:20.67px;background:#a2c500"></div>
<div class="a dt b" style="left:1043px;top:270.97px;width:69px;height:20.67px;line-height:20.67px;text-align:right;padding-right:2.5px;box-sizing:border-box;">53,10%</div>
<div class="a" style="left:1112px;top:269.07px;width:117px;height:20.67px;background:#00d800"></div>
<div class="a dt b" style="left:1112px;top:269.97px;width:117px;height:20.67px;line-height:20.67px;transform:scaleX(0.963);transform-origin:100% 50%;text-align:right;padding-right:3px;box-sizing:border-box;">44,88%</div>
<div class="a" style="left:1229px;top:269.07px;width:74px;height:20.67px;background:#00d800"></div>
<div class="a dt b" style="left:1229px;top:269.97px;width:74px;height:20.67px;line-height:20.67px;transform:scaleX(0.963);transform-origin:100% 50%;text-align:right;padding-right:3px;box-sizing:border-box;">39,52%</div>
<div class="a dt" style="left:27px;top:291.63px;width:85px;height:20.67px;line-height:20.67px;text-align:left;padding-left:3px;box-sizing:border-box;">02.09.2008</div>
<div class="a dt" style="left:112px;top:291.63px;width:63px;height:20.67px;line-height:20.67px;text-align:right;padding-right:2.5px;box-sizing:border-box;">165 900</div>
<div class="a dt" style="left:175px;top:291.63px;width:82px;height:20.67px;line-height:20.67px;text-align:right;padding-right:2.5px;box-sizing:border-box;">-0,00235</div>
<div class="a dt" style="left:257px;top:291.63px;width:63px;height:20.67px;line-height:20.67px;text-align:right;padding-right:2.5px;box-sizing:border-box;">165 900</div>
<div class="a dt" style="left:320px;top:291.63px;width:78px;height:20.67px;line-height:20.67px;text-align:right;padding-right:2.5px;box-sizing:border-box;">-0,00187</div>
<div class="a dt" style="left:398px;top:291.63px;width:73px;height:20.67px;line-height:20.67px;text-align:right;padding-right:3px;box-sizing:border-box;">0,030915</div>
<div class="a" style="left:471px;top:289.74px;width:68px;height:20.67px;background:#a2c500"></div>
<div class="a dt b" style="left:471px;top:291.63px;width:68px;height:20.67px;line-height:20.67px;text-align:right;padding-right:2.5px;box-sizing:border-box;">48,78%</div>
<div class="a dt" style="left:539px;top:291.63px;width:74px;height:20.67px;line-height:20.67px;text-align:right;padding-right:3px;box-sizing:border-box;">0,024198</div>
<div class="a" style="left:613px;top:289.74px;width:69px;height:20.67px;background:#a2c500"></div>
<div class="a dt b" style="left:613px;top:291.63px;width:69px;height:20.67px;line-height:20.67px;text-align:right;padding-right:2.5px;box-sizing:border-box;">38,18%</div>
<div class="a dt" style="left:682px;top:291.63px;width:77px;height:20.67px;line-height:20.67px;text-align:right;padding-right:3px;box-sizing:border-box;">0,020790</div>
<div class="a" style="left:759px;top:289.74px;width:69px;height:20.67px;background:#a2c500"></div>
<div class="a dt b" style="left:759px;top:291.63px;width:69px;height:20.67px;line-height:20.67px;text-align:right;padding-right:2.5px;box-sizing:border-box;">32,81%</div>
<div class="a dt" style="left:828px;top:291.63px;width:74px;height:20.67px;line-height:20.67px;text-align:right;padding-right:3px;box-sizing:border-box;">0,019359</div>
<div class="a" style="left:902px;top:289.74px;width:69px;height:20.67px;background:#a2c500"></div>
<div class="a dt b" style="left:902px;top:291.63px;width:69px;height:20.67px;line-height:20.67px;text-align:right;padding-right:2.5px;box-sizing:border-box;">30,55%</div>
<div class="a dt" style="left:971px;top:291.63px;width:72px;height:20.67px;line-height:20.67px;text-align:right;padding-right:3px;box-sizing:border-box;">0,032013</div>
<div class="a" style="left:1043px;top:289.74px;width:69px;height:20.67px;background:#a2c500"></div>
<div class="a dt b" style="left:1043px;top:291.63px;width:69px;height:20.67px;line-height:20.67px;text-align:right;padding-right:2.5px;box-sizing:border-box;">50,52%</div>
<div class="a" style="left:1112px;top:289.74px;width:117px;height:20.67px;background:#00d800"></div>
<div class="a dt b" style="left:1112px;top:290.63px;width:117px;height:20.67px;line-height:20.67px;transform:scaleX(0.963);transform-origin:100% 50%;text-align:right;padding-right:3px;box-sizing:border-box;">43,96%</div>
<div class="a" style="left:1229px;top:289.74px;width:74px;height:20.67px;background:#00d800"></div>
<div class="a dt b" style="left:1229px;top:290.63px;width:74px;height:20.67px;line-height:20.67px;transform:scaleX(0.963);transform-origin:100% 50%;text-align:right;padding-right:3px;box-sizing:border-box;">44,22%</div>
<div class="a dt" style="left:27px;top:312.30px;width:85px;height:20.67px;line-height:20.67px;text-align:left;padding-left:3px;box-sizing:border-box;">03.09.2008</div>
<div class="a dt" style="left:112px;top:312.30px;width:63px;height:20.67px;line-height:20.67px;text-align:right;padding-right:2.5px;box-sizing:border-box;">158 630</div>
<div class="a dt" style="left:175px;top:312.30px;width:82px;height:20.67px;line-height:20.67px;text-align:right;padding-right:2.5px;box-sizing:border-box;">-0,04481</div>
<div class="a dt" style="left:257px;top:312.30px;width:63px;height:20.67px;line-height:20.67px;text-align:right;padding-right:2.5px;box-sizing:border-box;">158 630</div>
<div class="a dt" style="left:320px;top:312.30px;width:78px;height:20.67px;line-height:20.67px;text-align:right;padding-right:2.5px;box-sizing:border-box;">-0,04481</div>
<div class="a dt" style="left:398px;top:312.30px;width:73px;height:20.67px;line-height:20.67px;text-align:right;padding-right:3px;box-sizing:border-box;">0,031570</div>
<div class="a" style="left:471px;top:310.41px;width:68px;height:20.67px;background:#a2c500"></div>
<div class="a dt b" style="left:471px;top:312.30px;width:68px;height:20.67px;line-height:20.67px;text-align:right;padding-right:2.5px;box-sizing:border-box;">49,82%</div>
<div class="a dt" style="left:539px;top:312.30px;width:74px;height:20.67px;line-height:20.67px;text-align:right;padding-right:3px;box-sizing:border-box;">0,024666</div>
<div class="a" style="left:613px;top:310.41px;width:69px;height:20.67px;background:#a2c500"></div>
<div class="a dt b" style="left:613px;top:312.30px;width:69px;height:20.67px;line-height:20.67px;text-align:right;padding-right:2.5px;box-sizing:border-box;">38,92%</div>
<div class="a dt" style="left:682px;top:312.30px;width:77px;height:20.67px;line-height:20.67px;text-align:right;padding-right:3px;box-sizing:border-box;">0,021149</div>
<div class="a" style="left:759px;top:310.41px;width:69px;height:20.67px;background:#a2c500"></div>
<div class="a dt b" style="left:759px;top:312.30px;width:69px;height:20.67px;line-height:20.67px;text-align:right;padding-right:2.5px;box-sizing:border-box;">33,37%</div>
<div class="a dt" style="left:828px;top:312.30px;width:74px;height:20.67px;line-height:20.67px;text-align:right;padding-right:3px;box-sizing:border-box;">0,019506</div>
<div class="a" style="left:902px;top:310.41px;width:69px;height:20.67px;background:#a2c500"></div>
<div class="a dt b" style="left:902px;top:312.30px;width:69px;height:20.67px;line-height:20.67px;text-align:right;padding-right:2.5px;box-sizing:border-box;">30,78%</div>
<div class="a dt" style="left:971px;top:312.30px;width:72px;height:20.67px;line-height:20.67px;text-align:right;padding-right:3px;box-sizing:border-box;">0,032965</div>
<div class="a" style="left:1043px;top:310.41px;width:69px;height:20.67px;background:#a2c500"></div>
<div class="a dt b" style="left:1043px;top:312.30px;width:69px;height:20.67px;line-height:20.67px;text-align:right;padding-right:2.5px;box-sizing:border-box;">52,02%</div>
<div class="a" style="left:1112px;top:310.41px;width:117px;height:20.67px;background:#00d800"></div>
<div class="a dt b" style="left:1112px;top:311.30px;width:117px;height:20.67px;line-height:20.67px;transform:scaleX(0.963);transform-origin:100% 50%;text-align:right;padding-right:3px;box-sizing:border-box;">44,99%</div>
<div class="a" style="left:1229px;top:310.41px;width:74px;height:20.67px;background:#00d800"></div>
<div class="a dt b" style="left:1229px;top:311.30px;width:74px;height:20.67px;line-height:20.67px;transform:scaleX(0.963);transform-origin:100% 50%;text-align:right;padding-right:3px;box-sizing:border-box;">36,94%</div>
<div class="a dt" style="left:27px;top:332.96px;width:85px;height:20.67px;line-height:20.67px;text-align:left;padding-left:3px;box-sizing:border-box;">04.09.2008</div>
<div class="a dt" style="left:112px;top:332.96px;width:63px;height:20.67px;line-height:20.67px;text-align:right;padding-right:2.5px;box-sizing:border-box;">152 665</div>
<div class="a dt" style="left:175px;top:332.96px;width:82px;height:20.67px;line-height:20.67px;text-align:right;padding-right:2.5px;box-sizing:border-box;">-0,03833</div>
<div class="a dt" style="left:257px;top:332.96px;width:63px;height:20.67px;line-height:20.67px;text-align:right;padding-right:2.5px;box-sizing:border-box;">152 615</div>
<div class="a dt" style="left:320px;top:332.96px;width:78px;height:20.67px;line-height:20.67px;text-align:right;padding-right:2.5px;box-sizing:border-box;">-0,03866</div>
<div class="a dt" style="left:398px;top:332.96px;width:73px;height:20.67px;line-height:20.67px;text-align:right;padding-right:3px;box-sizing:border-box;">0,031951</div>
<div class="a" style="left:471px;top:331.08px;width:68px;height:20.67px;background:#a2c500"></div>
<div class="a dt b" style="left:471px;top:332.96px;width:68px;height:20.67px;line-height:20.67px;text-align:right;padding-right:2.5px;box-sizing:border-box;">50,42%</div>
<div class="a dt" style="left:539px;top:332.96px;width:74px;height:20.67px;line-height:20.67px;text-align:right;padding-right:3px;box-sizing:border-box;">0,025011</div>
<div class="a" style="left:613px;top:331.08px;width:69px;height:20.67px;background:#a2c500"></div>
<div class="a dt b" style="left:613px;top:332.96px;width:69px;height:20.67px;line-height:20.67px;text-align:right;padding-right:2.5px;box-sizing:border-box;">39,47%</div>
<div class="a dt" style="left:682px;top:332.96px;width:77px;height:20.67px;line-height:20.67px;text-align:right;padding-right:3px;box-sizing:border-box;">0,021161</div>
<div class="a" style="left:759px;top:331.08px;width:69px;height:20.67px;background:#a2c500"></div>
<div class="a dt b" style="left:759px;top:332.96px;width:69px;height:20.67px;line-height:20.67px;text-align:right;padding-right:2.5px;box-sizing:border-box;">33,39%</div>
<div class="a dt" style="left:828px;top:332.96px;width:74px;height:20.67px;line-height:20.67px;text-align:right;padding-right:3px;box-sizing:border-box;">0,019651</div>
<div class="a" style="left:902px;top:331.08px;width:69px;height:20.67px;background:#a2c500"></div>
<div class="a dt b" style="left:902px;top:332.96px;width:69px;height:20.67px;line-height:20.67px;text-align:right;padding-right:2.5px;box-sizing:border-box;">31,01%</div>
<div class="a dt" style="left:971px;top:332.96px;width:72px;height:20.67px;line-height:20.67px;text-align:right;padding-right:3px;box-sizing:border-box;">0,033425</div>
<div class="a" style="left:1043px;top:331.08px;width:69px;height:20.67px;background:#a2c500"></div>
<div class="a dt b" style="left:1043px;top:332.96px;width:69px;height:20.67px;line-height:20.67px;text-align:right;padding-right:2.5px;box-sizing:border-box;">52,74%</div>
<div class="a" style="left:1112px;top:331.08px;width:117px;height:20.67px;background:#00d800"></div>
<div class="a dt b" style="left:1112px;top:331.96px;width:117px;height:20.67px;line-height:20.67px;transform:scaleX(0.963);transform-origin:100% 50%;text-align:right;padding-right:3px;box-sizing:border-box;">45,52%</div>
<div class="a" style="left:1229px;top:331.08px;width:74px;height:20.67px;background:#00d800"></div>
<div class="a dt b" style="left:1229px;top:331.96px;width:74px;height:20.67px;line-height:20.67px;transform:scaleX(0.963);transform-origin:100% 50%;text-align:right;padding-right:3px;box-sizing:border-box;">52,36%</div>
<div class="a dt" style="left:27px;top:353.62px;width:85px;height:20.67px;line-height:20.67px;text-align:left;padding-left:3px;box-sizing:border-box;">05.09.2008</div>
<div class="a dt" style="left:112px;top:353.62px;width:63px;height:20.67px;line-height:20.67px;text-align:right;padding-right:2.5px;box-sizing:border-box;">146 700</div>
<div class="a dt" style="left:175px;top:353.62px;width:82px;height:20.67px;line-height:20.67px;text-align:right;padding-right:2.5px;box-sizing:border-box;">-0,03986</div>
<div class="a dt" style="left:257px;top:353.62px;width:63px;height:20.67px;line-height:20.67px;text-align:right;padding-right:2.5px;box-sizing:border-box;">146 700</div>
<div class="a dt" style="left:320px;top:353.62px;width:78px;height:20.67px;line-height:20.67px;text-align:right;padding-right:2.5px;box-sizing:border-box;">-0,03953</div>
<div class="a dt" style="left:398px;top:353.62px;width:73px;height:20.67px;line-height:20.67px;text-align:right;padding-right:3px;box-sizing:border-box;">0,030921</div>
<div class="a" style="left:471px;top:351.75px;width:68px;height:20.67px;background:#a2c500"></div>
<div class="a dt b" style="left:471px;top:353.62px;width:68px;height:20.67px;line-height:20.67px;text-align:right;padding-right:2.5px;box-sizing:border-box;">48,79%</div>
<div class="a dt" style="left:539px;top:353.62px;width:74px;height:20.67px;line-height:20.67px;text-align:right;padding-right:3px;box-sizing:border-box;">0,025247</div>
<div class="a" style="left:613px;top:351.75px;width:69px;height:20.67px;background:#a2c500"></div>
<div class="a dt b" style="left:613px;top:353.62px;width:69px;height:20.67px;line-height:20.67px;text-align:right;padding-right:2.5px;box-sizing:border-box;">39,84%</div>
<div class="a dt" style="left:682px;top:353.62px;width:77px;height:20.67px;line-height:20.67px;text-align:right;padding-right:3px;box-sizing:border-box;">0,021353</div>
<div class="a" style="left:759px;top:351.75px;width:69px;height:20.67px;background:#a2c500"></div>
<div class="a dt b" style="left:759px;top:353.62px;width:69px;height:20.67px;line-height:20.67px;text-align:right;padding-right:2.5px;box-sizing:border-box;">33,69%</div>
<div class="a dt" style="left:828px;top:353.62px;width:74px;height:20.67px;line-height:20.67px;text-align:right;padding-right:3px;box-sizing:border-box;">0,019797</div>
<div class="a" style="left:902px;top:351.75px;width:69px;height:20.67px;background:#a2c500"></div>
<div class="a dt b" style="left:902px;top:353.62px;width:69px;height:20.67px;line-height:20.67px;text-align:right;padding-right:2.5px;box-sizing:border-box;">31,24%</div>
<div class="a dt" style="left:971px;top:353.62px;width:72px;height:20.67px;line-height:20.67px;text-align:right;padding-right:3px;box-sizing:border-box;">0,031113</div>
<div class="a" style="left:1043px;top:351.75px;width:69px;height:20.67px;background:#a2c500"></div>
<div class="a dt b" style="left:1043px;top:353.62px;width:69px;height:20.67px;line-height:20.67px;text-align:right;padding-right:2.5px;box-sizing:border-box;">49,10%</div>
<div class="a" style="left:1112px;top:351.75px;width:117px;height:20.67px;background:#00d800"></div>
<div class="a dt b" style="left:1112px;top:352.62px;width:117px;height:20.67px;line-height:20.67px;transform:scaleX(0.963);transform-origin:100% 50%;text-align:right;padding-right:3px;box-sizing:border-box;">43,97%</div>
<div class="a" style="left:1229px;top:351.75px;width:74px;height:20.67px;background:#00d800"></div>
<div class="a dt b" style="left:1229px;top:352.62px;width:74px;height:20.67px;line-height:20.67px;transform:scaleX(0.963);transform-origin:100% 50%;text-align:right;padding-right:3px;box-sizing:border-box;">54,27%</div>
<div class="a dt" style="left:27px;top:374.29px;width:85px;height:20.67px;line-height:20.67px;text-align:left;padding-left:3px;box-sizing:border-box;">08.09.2008</div>
<div class="a dt" style="left:112px;top:374.29px;width:63px;height:20.67px;line-height:20.67px;text-align:right;padding-right:2.5px;box-sizing:border-box;">151 250</div>
<div class="a dt" style="left:175px;top:374.29px;width:82px;height:20.67px;line-height:20.67px;text-align:right;padding-right:2.5px;box-sizing:border-box;">0,03054</div>
<div class="a dt" style="left:257px;top:374.29px;width:63px;height:20.67px;line-height:20.67px;text-align:right;padding-right:2.5px;box-sizing:border-box;">151 250</div>
<div class="a dt" style="left:320px;top:374.29px;width:78px;height:20.67px;line-height:20.67px;text-align:right;padding-right:2.5px;box-sizing:border-box;">0,03054</div>
<div class="a dt" style="left:398px;top:374.29px;width:73px;height:20.67px;line-height:20.67px;text-align:right;padding-right:3px;box-sizing:border-box;">0,031668</div>
<div class="a" style="left:471px;top:372.42px;width:68px;height:20.67px;background:#a2c500"></div>
<div class="a dt b" style="left:471px;top:374.29px;width:68px;height:20.67px;line-height:20.67px;text-align:right;padding-right:2.5px;box-sizing:border-box;">49,97%</div>
<div class="a dt" style="left:539px;top:374.29px;width:74px;height:20.67px;line-height:20.67px;text-align:right;padding-right:3px;box-sizing:border-box;">0,025641</div>
<div class="a" style="left:613px;top:372.42px;width:69px;height:20.67px;background:#a2c500"></div>
<div class="a dt b" style="left:613px;top:374.29px;width:69px;height:20.67px;line-height:20.67px;text-align:right;padding-right:2.5px;box-sizing:border-box;">40,46%</div>
<div class="a dt" style="left:682px;top:374.29px;width:77px;height:20.67px;line-height:20.67px;text-align:right;padding-right:3px;box-sizing:border-box;">0,021564</div>
<div class="a" style="left:759px;top:372.42px;width:69px;height:20.67px;background:#a2c500"></div>
<div class="a dt b" style="left:759px;top:374.29px;width:69px;height:20.67px;line-height:20.67px;text-align:right;padding-right:2.5px;box-sizing:border-box;">34,03%</div>
<div class="a dt" style="left:828px;top:374.29px;width:74px;height:20.67px;line-height:20.67px;text-align:right;padding-right:3px;box-sizing:border-box;">0,019895</div>
<div class="a" style="left:902px;top:372.42px;width:69px;height:20.67px;background:#a2c500"></div>
<div class="a dt b" style="left:902px;top:374.29px;width:69px;height:20.67px;line-height:20.67px;text-align:right;padding-right:2.5px;box-sizing:border-box;">31,39%</div>
<div class="a dt" style="left:971px;top:374.29px;width:72px;height:20.67px;line-height:20.67px;text-align:right;padding-right:3px;box-sizing:border-box;">0,030812</div>
<div class="a" style="left:1043px;top:372.42px;width:69px;height:20.67px;background:#a2c500"></div>
<div class="a dt b" style="left:1043px;top:374.29px;width:69px;height:20.67px;line-height:20.67px;text-align:right;padding-right:2.5px;box-sizing:border-box;">48,62%</div>
<div class="a" style="left:1112px;top:372.42px;width:117px;height:20.67px;background:#00d800"></div>
<div class="a dt b" style="left:1112px;top:373.29px;width:117px;height:20.67px;line-height:20.67px;transform:scaleX(0.963);transform-origin:100% 50%;text-align:right;padding-right:3px;box-sizing:border-box;">44,28%</div>
<div class="a" style="left:1229px;top:372.42px;width:74px;height:20.67px;background:#00d800"></div>
<div class="a dt b" style="left:1229px;top:373.29px;width:74px;height:20.67px;line-height:20.67px;transform:scaleX(0.963);transform-origin:100% 50%;text-align:right;padding-right:3px;box-sizing:border-box;">78,76%</div>
<div class="a dt" style="left:27px;top:394.96px;width:85px;height:20.67px;line-height:20.67px;text-align:left;padding-left:3px;box-sizing:border-box;">09.09.2008</div>
<div class="a dt" style="left:112px;top:394.96px;width:63px;height:20.67px;line-height:20.67px;text-align:right;padding-right:2.5px;box-sizing:border-box;">139 250</div>
<div class="a dt" style="left:175px;top:394.96px;width:82px;height:20.67px;line-height:20.67px;text-align:right;padding-right:2.5px;box-sizing:border-box;">-0,08266</div>
<div class="a dt" style="left:257px;top:394.96px;width:63px;height:20.67px;line-height:20.67px;text-align:right;padding-right:2.5px;box-sizing:border-box;">136 180</div>
<div class="a dt" style="left:320px;top:394.96px;width:78px;height:20.67px;line-height:20.67px;text-align:right;padding-right:2.5px;box-sizing:border-box;">-0,10496</div>
<div class="a dt" style="left:398px;top:394.96px;width:73px;height:20.67px;line-height:20.67px;text-align:right;padding-right:3px;box-sizing:border-box;">0,036301</div>
<div class="a" style="left:471px;top:393.09px;width:68px;height:20.67px;background:#a2c500"></div>
<div class="a dt b" style="left:471px;top:394.96px;width:68px;height:20.67px;line-height:20.67px;text-align:right;padding-right:2.5px;box-sizing:border-box;">57,28%</div>
<div class="a dt" style="left:539px;top:394.96px;width:74px;height:20.67px;line-height:20.67px;text-align:right;padding-right:3px;box-sizing:border-box;">0,028387</div>
<div class="a" style="left:613px;top:393.09px;width:69px;height:20.67px;background:#a2c500"></div>
<div class="a dt b" style="left:613px;top:394.96px;width:69px;height:20.67px;line-height:20.67px;text-align:right;padding-right:2.5px;box-sizing:border-box;">44,79%</div>
<div class="a dt" style="left:682px;top:394.96px;width:77px;height:20.67px;line-height:20.67px;text-align:right;padding-right:3px;box-sizing:border-box;">0,023427</div>
<div class="a" style="left:759px;top:393.09px;width:69px;height:20.67px;background:#a2c500"></div>
<div class="a dt b" style="left:759px;top:394.96px;width:69px;height:20.67px;line-height:20.67px;text-align:right;padding-right:2.5px;box-sizing:border-box;">36,97%</div>
<div class="a dt" style="left:828px;top:394.96px;width:74px;height:20.67px;line-height:20.67px;text-align:right;padding-right:3px;box-sizing:border-box;">0,020931</div>
<div class="a" style="left:902px;top:393.09px;width:69px;height:20.67px;background:#a2c500"></div>
<div class="a dt b" style="left:902px;top:394.96px;width:69px;height:20.67px;line-height:20.67px;text-align:right;padding-right:2.5px;box-sizing:border-box;">33,03%</div>
<div class="a dt" style="left:971px;top:394.96px;width:72px;height:20.67px;line-height:20.67px;text-align:right;padding-right:3px;box-sizing:border-box;">0,036764</div>
<div class="a" style="left:1043px;top:393.09px;width:69px;height:20.67px;background:#a2c500"></div>
<div class="a dt b" style="left:1043px;top:394.96px;width:69px;height:20.67px;line-height:20.67px;text-align:right;padding-right:2.5px;box-sizing:border-box;">58,01%</div>
<div class="a" style="left:1112px;top:393.09px;width:117px;height:20.67px;background:#ff1c00"></div>
<div class="a dt b" style="left:1112px;top:393.96px;width:117px;height:20.67px;line-height:20.67px;transform:scaleX(0.963);transform-origin:100% 50%;text-align:right;padding-right:3px;box-sizing:border-box;">50,78%</div>
<div class="a" style="left:1229px;top:393.09px;width:74px;height:20.67px;background:#ff1c00"></div>
<div class="a dt b" style="left:1229px;top:393.96px;width:74px;height:20.67px;line-height:20.67px;transform:scaleX(0.963);transform-origin:100% 50%;text-align:right;padding-right:3px;box-sizing:border-box;">102,51%</div>
<div class="a dt" style="left:27px;top:415.62px;width:85px;height:20.67px;line-height:20.67px;text-align:left;padding-left:3px;box-sizing:border-box;">10.09.2008</div>
<div class="a dt" style="left:112px;top:415.62px;width:63px;height:20.67px;line-height:20.67px;text-align:right;padding-right:2.5px;box-sizing:border-box;">130 600</div>
<div class="a dt" style="left:175px;top:415.62px;width:82px;height:20.67px;line-height:20.67px;text-align:right;padding-right:2.5px;box-sizing:border-box;">-0,06413</div>
<div class="a dt" style="left:257px;top:415.62px;width:63px;height:20.67px;line-height:20.67px;text-align:right;padding-right:2.5px;box-sizing:border-box;">130 600</div>
<div class="a dt" style="left:320px;top:415.62px;width:78px;height:20.67px;line-height:20.67px;text-align:right;padding-right:2.5px;box-sizing:border-box;">-0,04184</div>
<div class="a dt" style="left:398px;top:415.62px;width:73px;height:20.67px;line-height:20.67px;text-align:right;padding-right:3px;box-sizing:border-box;">0,035429</div>
<div class="a" style="left:471px;top:413.76px;width:68px;height:20.67px;background:#a2c500"></div>
<div class="a dt b" style="left:471px;top:415.62px;width:68px;height:20.67px;line-height:20.67px;text-align:right;padding-right:2.5px;box-sizing:border-box;">55,91%</div>
<div class="a dt" style="left:539px;top:415.62px;width:74px;height:20.67px;line-height:20.67px;text-align:right;padding-right:3px;box-sizing:border-box;">0,028671</div>
<div class="a" style="left:613px;top:413.76px;width:69px;height:20.67px;background:#a2c500"></div>
<div class="a dt b" style="left:613px;top:415.62px;width:69px;height:20.67px;line-height:20.67px;text-align:right;padding-right:2.5px;box-sizing:border-box;">45,24%</div>
<div class="a dt" style="left:682px;top:415.62px;width:77px;height:20.67px;line-height:20.67px;text-align:right;padding-right:3px;box-sizing:border-box;">0,023693</div>
<div class="a" style="left:759px;top:413.76px;width:69px;height:20.67px;background:#a2c500"></div>
<div class="a dt b" style="left:759px;top:415.62px;width:69px;height:20.67px;line-height:20.67px;text-align:right;padding-right:2.5px;box-sizing:border-box;">37,39%</div>
<div class="a dt" style="left:828px;top:415.62px;width:74px;height:20.67px;line-height:20.67px;text-align:right;padding-right:3px;box-sizing:border-box;">0,021065</div>
<div class="a" style="left:902px;top:413.76px;width:69px;height:20.67px;background:#a2c500"></div>
<div class="a dt b" style="left:902px;top:415.62px;width:69px;height:20.67px;line-height:20.67px;text-align:right;padding-right:2.5px;box-sizing:border-box;">33,24%</div>
<div class="a dt" style="left:971px;top:415.62px;width:72px;height:20.67px;line-height:20.67px;text-align:right;padding-right:3px;box-sizing:border-box;">0,037270</div>
<div class="a" style="left:1043px;top:413.76px;width:69px;height:20.67px;background:#a2c500"></div>
<div class="a dt b" style="left:1043px;top:415.62px;width:69px;height:20.67px;line-height:20.67px;text-align:right;padding-right:2.5px;box-sizing:border-box;">58,81%</div>
<div class="a" style="left:1112px;top:413.76px;width:117px;height:20.67px;background:#d41400"></div>
<div class="a dt b" style="left:1112px;top:414.62px;width:117px;height:20.67px;line-height:20.67px;transform:scaleX(0.963);transform-origin:100% 50%;text-align:right;padding-right:3px;box-sizing:border-box;">50,88%</div>
<div class="a" style="left:1229px;top:413.76px;width:74px;height:20.67px;background:#ff1c00"></div>
<div class="a dt b" style="left:1229px;top:414.62px;width:74px;height:20.67px;line-height:20.67px;transform:scaleX(0.963);transform-origin:100% 50%;text-align:right;padding-right:3px;box-sizing:border-box;">122,26%</div>
<div class="a dt" style="left:27px;top:436.28px;width:85px;height:20.67px;line-height:20.67px;text-align:left;padding-left:3px;box-sizing:border-box;">11.09.2008</div>
<div class="a dt" style="left:112px;top:436.28px;width:63px;height:20.67px;line-height:20.67px;text-align:right;padding-right:2.5px;box-sizing:border-box;">123 385</div>
<div class="a dt" style="left:175px;top:436.28px;width:82px;height:20.67px;line-height:20.67px;text-align:right;padding-right:2.5px;box-sizing:border-box;">-0,05683</div>
<div class="a dt" style="left:257px;top:436.28px;width:63px;height:20.67px;line-height:20.67px;text-align:right;padding-right:2.5px;box-sizing:border-box;">123 385</div>
<div class="a dt" style="left:320px;top:436.28px;width:78px;height:20.67px;line-height:20.67px;text-align:right;padding-right:2.5px;box-sizing:border-box;">-0,05683</div>
<div class="a dt" style="left:398px;top:436.28px;width:73px;height:20.67px;line-height:20.67px;text-align:right;padding-right:3px;box-sizing:border-box;">0,036226</div>
<div class="a" style="left:471px;top:434.43px;width:68px;height:20.67px;background:#a2c500"></div>
<div class="a dt b" style="left:471px;top:436.28px;width:68px;height:20.67px;line-height:20.67px;text-align:right;padding-right:2.5px;box-sizing:border-box;">57,16%</div>
<div class="a dt" style="left:539px;top:436.28px;width:74px;height:20.67px;line-height:20.67px;text-align:right;padding-right:3px;box-sizing:border-box;">0,029276</div>
<div class="a" style="left:613px;top:434.43px;width:69px;height:20.67px;background:#a2c500"></div>
<div class="a dt b" style="left:613px;top:436.28px;width:69px;height:20.67px;line-height:20.67px;text-align:right;padding-right:2.5px;box-sizing:border-box;">46,20%</div>
<div class="a dt" style="left:682px;top:436.28px;width:77px;height:20.67px;line-height:20.67px;text-align:right;padding-right:3px;box-sizing:border-box;">0,024027</div>
<div class="a" style="left:759px;top:434.43px;width:69px;height:20.67px;background:#a2c500"></div>
<div class="a dt b" style="left:759px;top:436.28px;width:69px;height:20.67px;line-height:20.67px;text-align:right;padding-right:2.5px;box-sizing:border-box;">37,91%</div>
<div class="a dt" style="left:828px;top:436.28px;width:74px;height:20.67px;line-height:20.67px;text-align:right;padding-right:3px;box-sizing:border-box;">0,021351</div>
<div class="a" style="left:902px;top:434.43px;width:69px;height:20.67px;background:#a2c500"></div>
<div class="a dt b" style="left:902px;top:436.28px;width:69px;height:20.67px;line-height:20.67px;text-align:right;padding-right:2.5px;box-sizing:border-box;">33,69%</div>
<div class="a dt" style="left:971px;top:436.28px;width:72px;height:20.67px;line-height:20.67px;text-align:right;padding-right:3px;box-sizing:border-box;">0,037799</div>
<div class="a" style="left:1043px;top:434.43px;width:69px;height:20.67px;background:#a2c500"></div>
<div class="a dt b" style="left:1043px;top:436.28px;width:69px;height:20.67px;line-height:20.67px;text-align:right;padding-right:2.5px;box-sizing:border-box;">59,65%</div>
<div class="a" style="left:1112px;top:434.43px;width:117px;height:20.67px;background:#d41400"></div>
<div class="a dt b" style="left:1112px;top:435.28px;width:117px;height:20.67px;line-height:20.67px;transform:scaleX(0.963);transform-origin:100% 50%;text-align:right;padding-right:3px;box-sizing:border-box;">51,78%</div>
<div class="a" style="left:1229px;top:434.43px;width:74px;height:20.67px;background:#ff1c00"></div>
<div class="a dt b" style="left:1229px;top:435.28px;width:74px;height:20.67px;line-height:20.67px;transform:scaleX(0.963);transform-origin:100% 50%;text-align:right;padding-right:3px;box-sizing:border-box;">146,51%</div>
<div class="a dt" style="left:27px;top:456.95px;width:85px;height:20.67px;line-height:20.67px;text-align:left;padding-left:3px;box-sizing:border-box;">12.09.2008</div>
<div class="a dt" style="left:112px;top:456.95px;width:63px;height:20.67px;line-height:20.67px;text-align:right;padding-right:2.5px;box-sizing:border-box;">133 760</div>
<div class="a dt" style="left:175px;top:456.95px;width:82px;height:20.67px;line-height:20.67px;text-align:right;padding-right:2.5px;box-sizing:border-box;">0,08074</div>
<div class="a dt" style="left:257px;top:456.95px;width:63px;height:20.67px;line-height:20.67px;text-align:right;padding-right:2.5px;box-sizing:border-box;">133 760</div>
<div class="a dt" style="left:320px;top:456.95px;width:78px;height:20.67px;line-height:20.67px;text-align:right;padding-right:2.5px;box-sizing:border-box;">0,08074</div>
<div class="a dt" style="left:398px;top:456.95px;width:73px;height:20.67px;line-height:20.67px;text-align:right;padding-right:3px;box-sizing:border-box;">0,040244</div>
<div class="a" style="left:471px;top:455.10px;width:68px;height:20.67px;background:#a2c500"></div>
<div class="a dt b" style="left:471px;top:456.95px;width:68px;height:20.67px;line-height:20.67px;text-align:right;padding-right:2.5px;box-sizing:border-box;">63,50%</div>
<div class="a dt" style="left:539px;top:456.95px;width:74px;height:20.67px;line-height:20.67px;text-align:right;padding-right:3px;box-sizing:border-box;">0,031583</div>
<div class="a" style="left:613px;top:455.10px;width:69px;height:20.67px;background:#a2c500"></div>
<div class="a dt b" style="left:613px;top:456.95px;width:69px;height:20.67px;line-height:20.67px;text-align:right;padding-right:2.5px;box-sizing:border-box;">49,84%</div>
<div class="a dt" style="left:682px;top:456.95px;width:77px;height:20.67px;line-height:20.67px;text-align:right;padding-right:3px;box-sizing:border-box;">0,025227</div>
<div class="a" style="left:759px;top:455.10px;width:69px;height:20.67px;background:#a2c500"></div>
<div class="a dt b" style="left:759px;top:456.95px;width:69px;height:20.67px;line-height:20.67px;text-align:right;padding-right:2.5px;box-sizing:border-box;">39,81%</div>
<div class="a dt" style="left:828px;top:456.95px;width:74px;height:20.67px;line-height:20.67px;text-align:right;padding-right:3px;box-sizing:border-box;">0,021968</div>
<div class="a" style="left:902px;top:455.10px;width:69px;height:20.67px;background:#a2c500"></div>
<div class="a dt b" style="left:902px;top:456.95px;width:69px;height:20.67px;line-height:20.67px;text-align:right;padding-right:2.5px;box-sizing:border-box;">34,66%</div>
<div class="a dt" style="left:971px;top:456.95px;width:72px;height:20.67px;line-height:20.67px;text-align:right;padding-right:3px;box-sizing:border-box;">0,043797</div>
<div class="a" style="left:1043px;top:455.10px;width:69px;height:20.67px;background:#a2c500"></div>
<div class="a dt b" style="left:1043px;top:456.95px;width:69px;height:20.67px;line-height:20.67px;text-align:right;padding-right:2.5px;box-sizing:border-box;">69,11%</div>
<div class="a" style="left:1112px;top:455.10px;width:117px;height:20.67px;background:#00d800"></div>
<div class="a dt b" style="left:1112px;top:455.95px;width:117px;height:20.67px;line-height:20.67px;transform:scaleX(0.963);transform-origin:100% 50%;text-align:right;padding-right:3px;box-sizing:border-box;">57,74%</div>
<div class="a" style="left:1229px;top:455.10px;width:74px;height:20.67px;background:#00d800"></div>
<div class="a dt b" style="left:1229px;top:455.95px;width:74px;height:20.67px;line-height:20.67px;transform:scaleX(0.963);transform-origin:100% 50%;text-align:right;padding-right:3px;box-sizing:border-box;">44,33%</div>
<div class="a dt" style="left:27px;top:477.62px;width:85px;height:20.67px;line-height:20.67px;text-align:left;padding-left:3px;box-sizing:border-box;">15.09.2008</div>
<div class="a dt" style="left:112px;top:477.62px;width:63px;height:20.67px;line-height:20.67px;text-align:right;padding-right:2.5px;box-sizing:border-box;">125 490</div>
<div class="a dt" style="left:175px;top:477.62px;width:82px;height:20.67px;line-height:20.67px;text-align:right;padding-right:2.5px;box-sizing:border-box;">-0,06382</div>
<div class="a dt" style="left:257px;top:477.62px;width:63px;height:20.67px;line-height:20.67px;text-align:right;padding-right:2.5px;box-sizing:border-box;">125 490</div>
<div class="a dt" style="left:320px;top:477.62px;width:78px;height:20.67px;line-height:20.67px;text-align:right;padding-right:2.5px;box-sizing:border-box;">-0,06382</div>
<div class="a dt" style="left:398px;top:477.62px;width:73px;height:20.67px;line-height:20.67px;text-align:right;padding-right:3px;box-sizing:border-box;">0,041235</div>
<div class="a" style="left:471px;top:475.77px;width:68px;height:20.67px;background:#a2c500"></div>
<div class="a dt b" style="left:471px;top:477.62px;width:68px;height:20.67px;line-height:20.67px;text-align:right;padding-right:2.5px;box-sizing:border-box;">65,07%</div>
<div class="a dt" style="left:539px;top:477.62px;width:74px;height:20.67px;line-height:20.67px;text-align:right;padding-right:3px;box-sizing:border-box;">0,032332</div>
<div class="a" style="left:613px;top:475.77px;width:69px;height:20.67px;background:#a2c500"></div>
<div class="a dt b" style="left:613px;top:477.62px;width:69px;height:20.67px;line-height:20.67px;text-align:right;padding-right:2.5px;box-sizing:border-box;">51,02%</div>
<div class="a dt" style="left:682px;top:477.62px;width:77px;height:20.67px;line-height:20.67px;text-align:right;padding-right:3px;box-sizing:border-box;">0,025822</div>
<div class="a" style="left:759px;top:475.77px;width:69px;height:20.67px;background:#a2c500"></div>
<div class="a dt b" style="left:759px;top:477.62px;width:69px;height:20.67px;line-height:20.67px;text-align:right;padding-right:2.5px;box-sizing:border-box;">40,75%</div>
<div class="a dt" style="left:828px;top:477.62px;width:74px;height:20.67px;line-height:20.67px;text-align:right;padding-right:3px;box-sizing:border-box;">0,022319</div>
<div class="a" style="left:902px;top:475.77px;width:69px;height:20.67px;background:#a2c500"></div>
<div class="a dt b" style="left:902px;top:477.62px;width:69px;height:20.67px;line-height:20.67px;text-align:right;padding-right:2.5px;box-sizing:border-box;">35,22%</div>
<div class="a dt" style="left:971px;top:477.62px;width:72px;height:20.67px;line-height:20.67px;text-align:right;padding-right:3px;box-sizing:border-box;">0,045104</div>
<div class="a" style="left:1043px;top:475.77px;width:69px;height:20.67px;background:#a2c500"></div>
<div class="a dt b" style="left:1043px;top:477.62px;width:69px;height:20.67px;line-height:20.67px;text-align:right;padding-right:2.5px;box-sizing:border-box;">71,17%</div>
<div class="a" style="left:1112px;top:475.77px;width:117px;height:20.67px;background:#00d800"></div>
<div class="a dt b" style="left:1112px;top:476.62px;width:117px;height:20.67px;line-height:20.67px;transform:scaleX(0.963);transform-origin:100% 50%;text-align:right;padding-right:3px;box-sizing:border-box;">59,25%</div>
<div class="a" style="left:1229px;top:475.77px;width:74px;height:20.67px;background:#00d800"></div>
<div class="a dt b" style="left:1229px;top:476.62px;width:74px;height:20.67px;line-height:20.67px;transform:scaleX(0.963);transform-origin:100% 50%;text-align:right;padding-right:3px;box-sizing:border-box;">58,68%</div>
<div class="a dt" style="left:27px;top:498.28px;width:85px;height:20.67px;line-height:20.67px;text-align:left;padding-left:3px;box-sizing:border-box;">16.09.2008</div>
<div class="a dt" style="left:112px;top:498.28px;width:63px;height:20.67px;line-height:20.67px;text-align:right;padding-right:2.5px;box-sizing:border-box;">107 485</div>
<div class="a dt" style="left:175px;top:498.28px;width:82px;height:20.67px;line-height:20.67px;text-align:right;padding-right:2.5px;box-sizing:border-box;">-0,15487</div>
<div class="a dt" style="left:257px;top:498.28px;width:63px;height:20.67px;line-height:20.67px;text-align:right;padding-right:2.5px;box-sizing:border-box;">96 340</div>
<div class="a dt" style="left:320px;top:498.28px;width:78px;height:20.67px;line-height:20.67px;text-align:right;padding-right:2.5px;box-sizing:border-box;">-0,26434</div>
<div class="a dt" style="left:398px;top:498.28px;width:73px;height:20.67px;line-height:20.67px;text-align:right;padding-right:3px;box-sizing:border-box;">0,061373</div>
<div class="a" style="left:471px;top:496.44px;width:68px;height:20.67px;background:#a2c500"></div>
<div class="a dt b" style="left:471px;top:498.28px;width:68px;height:20.67px;line-height:20.67px;text-align:right;padding-right:2.5px;box-sizing:border-box;">96,85%</div>
<div class="a dt" style="left:539px;top:498.28px;width:74px;height:20.67px;line-height:20.67px;text-align:right;padding-right:3px;box-sizing:border-box;">0,046045</div>
<div class="a" style="left:613px;top:496.44px;width:69px;height:20.67px;background:#a2c500"></div>
<div class="a dt b" style="left:613px;top:498.28px;width:69px;height:20.67px;line-height:20.67px;text-align:right;padding-right:2.5px;box-sizing:border-box;">72,66%</div>
<div class="a dt" style="left:682px;top:498.28px;width:77px;height:20.67px;line-height:20.67px;text-align:right;padding-right:3px;box-sizing:border-box;">0,035046</div>
<div class="a" style="left:759px;top:496.44px;width:69px;height:20.67px;background:#a2c500"></div>
<div class="a dt b" style="left:759px;top:498.28px;width:69px;height:20.67px;line-height:20.67px;text-align:right;padding-right:2.5px;box-sizing:border-box;">55,30%</div>
<div class="a dt" style="left:828px;top:498.28px;width:74px;height:20.67px;line-height:20.67px;text-align:right;padding-right:3px;box-sizing:border-box;">0,027805</div>
<div class="a" style="left:902px;top:496.44px;width:69px;height:20.67px;background:#a2c500"></div>
<div class="a dt b" style="left:902px;top:498.28px;width:69px;height:20.67px;line-height:20.67px;text-align:right;padding-right:2.5px;box-sizing:border-box;">43,88%</div>
<div class="a dt" style="left:971px;top:498.28px;width:72px;height:20.67px;line-height:20.67px;text-align:right;padding-right:3px;box-sizing:border-box;">0,070721</div>
<div class="a" style="left:1043px;top:496.44px;width:69px;height:20.67px;background:#a2c500"></div>
<div class="a dt b" style="left:1043px;top:498.28px;width:69px;height:20.67px;line-height:20.67px;text-align:right;padding-right:2.5px;box-sizing:border-box;">111,60%</div>
<div class="a" style="left:1112px;top:496.44px;width:117px;height:20.67px;background:#00d800"></div>
<div class="a dt b" style="left:1112px;top:497.28px;width:117px;height:20.67px;line-height:20.67px;transform:scaleX(0.963);transform-origin:100% 50%;text-align:right;padding-right:3px;box-sizing:border-box;">88,29%</div>
<div class="a" style="left:1229px;top:496.44px;width:74px;height:20.67px;background:#00d800"></div>
<div class="a dt b" style="left:1229px;top:497.28px;width:74px;height:20.67px;line-height:20.67px;transform:scaleX(0.963);transform-origin:100% 50%;text-align:right;padding-right:3px;box-sizing:border-box;">85,83%</div>
<div class="a dt" style="left:27px;top:518.94px;width:85px;height:20.67px;line-height:20.67px;text-align:left;padding-left:3px;box-sizing:border-box;">17.09.2008</div>
<div class="a dt" style="left:112px;top:518.94px;width:63px;height:20.67px;line-height:20.67px;text-align:right;padding-right:2.5px;box-sizing:border-box;">96 300</div>
<div class="a dt" style="left:175px;top:518.94px;width:82px;height:20.67px;line-height:20.67px;text-align:right;padding-right:2.5px;box-sizing:border-box;">-0,10988</div>
<div class="a dt" style="left:257px;top:518.94px;width:63px;height:20.67px;line-height:20.67px;text-align:right;padding-right:2.5px;box-sizing:border-box;">96 300</div>
<div class="a dt" style="left:320px;top:518.94px;width:78px;height:20.67px;line-height:20.67px;text-align:right;padding-right:2.5px;box-sizing:border-box;">-0,00042</div>
<div class="a dt" style="left:398px;top:518.94px;width:73px;height:20.67px;line-height:20.67px;text-align:right;padding-right:3px;box-sizing:border-box;">0,061156</div>
<div class="a" style="left:471px;top:517.11px;width:68px;height:20.67px;background:#a2c500"></div>
<div class="a dt b" style="left:471px;top:518.94px;width:68px;height:20.67px;line-height:20.67px;text-align:right;padding-right:2.5px;box-sizing:border-box;">96,50%</div>
<div class="a dt" style="left:539px;top:518.94px;width:74px;height:20.67px;line-height:20.67px;text-align:right;padding-right:3px;box-sizing:border-box;">0,046043</div>
<div class="a" style="left:613px;top:517.11px;width:69px;height:20.67px;background:#a2c500"></div>
<div class="a dt b" style="left:613px;top:518.94px;width:69px;height:20.67px;line-height:20.67px;text-align:right;padding-right:2.5px;box-sizing:border-box;">72,65%</div>
<div class="a dt" style="left:682px;top:518.94px;width:77px;height:20.67px;line-height:20.67px;text-align:right;padding-right:3px;box-sizing:border-box;">0,035028</div>
<div class="a" style="left:759px;top:517.11px;width:69px;height:20.67px;background:#a2c500"></div>
<div class="a dt b" style="left:759px;top:518.94px;width:69px;height:20.67px;line-height:20.67px;text-align:right;padding-right:2.5px;box-sizing:border-box;">55,27%</div>
<div class="a dt" style="left:828px;top:518.94px;width:74px;height:20.67px;line-height:20.67px;text-align:right;padding-right:3px;box-sizing:border-box;">0,027805</div>
<div class="a" style="left:902px;top:517.11px;width:69px;height:20.67px;background:#a2c500"></div>
<div class="a dt b" style="left:902px;top:518.94px;width:69px;height:20.67px;line-height:20.67px;text-align:right;padding-right:2.5px;box-sizing:border-box;">43,88%</div>
<div class="a dt" style="left:971px;top:518.94px;width:72px;height:20.67px;line-height:20.67px;text-align:right;padding-right:3px;box-sizing:border-box;">0,069936</div>
<div class="a" style="left:1043px;top:517.11px;width:69px;height:20.67px;background:#a2c500"></div>
<div class="a dt b" style="left:1043px;top:518.94px;width:69px;height:20.67px;line-height:20.67px;text-align:right;padding-right:2.5px;box-sizing:border-box;">110,36%</div>
<div class="a" style="left:1112px;top:517.11px;width:117px;height:20.67px;background:#00d800"></div>
<div class="a dt b" style="left:1112px;top:517.94px;width:117px;height:20.67px;line-height:20.67px;transform:scaleX(0.963);transform-origin:100% 50%;text-align:right;padding-right:3px;box-sizing:border-box;">87,77%</div>
<div class="a" style="left:1229px;top:517.11px;width:74px;height:20.67px;background:#00d800"></div>
<div class="a dt b" style="left:1229px;top:517.94px;width:74px;height:20.67px;line-height:20.67px;transform:scaleX(0.963);transform-origin:100% 50%;text-align:right;padding-right:3px;box-sizing:border-box;">102,32%</div>
<div class="a dt" style="left:27px;top:539.61px;width:85px;height:20.67px;line-height:20.67px;text-align:left;padding-left:3px;box-sizing:border-box;">19.09.2008</div>
<div class="a dt" style="left:112px;top:539.61px;width:63px;height:20.67px;line-height:20.67px;text-align:right;padding-right:2.5px;box-sizing:border-box;">123 310</div>
<div class="a dt" style="left:175px;top:539.61px;width:82px;height:20.67px;line-height:20.67px;text-align:right;padding-right:2.5px;box-sizing:border-box;">0,24723</div>
<div class="a dt" style="left:257px;top:539.61px;width:63px;height:20.67px;line-height:20.67px;text-align:right;padding-right:2.5px;box-sizing:border-box;">136 975</div>
<div class="a dt" style="left:320px;top:539.61px;width:78px;height:20.67px;line-height:20.67px;text-align:right;padding-right:2.5px;box-sizing:border-box;">0,35233</div>
<div class="a dt" style="left:398px;top:539.61px;width:73px;height:20.67px;line-height:20.67px;text-align:right;padding-right:3px;box-sizing:border-box;">0,091570</div>
<div class="a" style="left:471px;top:537.78px;width:68px;height:20.67px;background:#a2c500"></div>
<div class="a dt b" style="left:471px;top:539.61px;width:68px;height:20.67px;line-height:20.67px;text-align:right;padding-right:2.5px;box-sizing:border-box;">144,50%</div>
<div class="a dt" style="left:539px;top:539.61px;width:74px;height:20.67px;line-height:20.67px;text-align:right;padding-right:3px;box-sizing:border-box;">0,066054</div>
<div class="a" style="left:613px;top:537.78px;width:69px;height:20.67px;background:#a2c500"></div>
<div class="a dt b" style="left:613px;top:539.61px;width:69px;height:20.67px;line-height:20.67px;text-align:right;padding-right:2.5px;box-sizing:border-box;">104,23%</div>
<div class="a dt" style="left:682px;top:539.61px;width:77px;height:20.67px;line-height:20.67px;text-align:right;padding-right:3px;box-sizing:border-box;">0,047931</div>
<div class="a" style="left:759px;top:537.78px;width:69px;height:20.67px;background:#a2c500"></div>
<div class="a dt b" style="left:759px;top:539.61px;width:69px;height:20.67px;line-height:20.67px;text-align:right;padding-right:2.5px;box-sizing:border-box;">75,63%</div>
<div class="a dt" style="left:828px;top:539.61px;width:74px;height:20.67px;line-height:20.67px;text-align:right;padding-right:3px;box-sizing:border-box;">0,035740</div>
<div class="a" style="left:902px;top:537.78px;width:69px;height:20.67px;background:#a2c500"></div>
<div class="a dt b" style="left:902px;top:539.61px;width:69px;height:20.67px;line-height:20.67px;text-align:right;padding-right:2.5px;box-sizing:border-box;">56,40%</div>
<div class="a dt" style="left:971px;top:539.61px;width:72px;height:20.67px;line-height:20.67px;text-align:right;padding-right:3px;box-sizing:border-box;">0,110294</div>
<div class="a" style="left:1043px;top:537.78px;width:69px;height:20.67px;background:#a2c500"></div>
<div class="a dt b" style="left:1043px;top:539.61px;width:69px;height:20.67px;line-height:20.67px;text-align:right;padding-right:2.5px;box-sizing:border-box;">174,04%</div>
<div class="a" style="left:1112px;top:537.78px;width:117px;height:20.67px;background:#ff1c00"></div>
<div class="a dt b" style="left:1112px;top:538.61px;width:117px;height:20.67px;line-height:20.67px;transform:scaleX(0.963);transform-origin:100% 50%;text-align:right;padding-right:3px;box-sizing:border-box;">132,05%</div>
<div class="a" style="left:1229px;top:537.78px;width:74px;height:20.67px;background:#ff1c00"></div>
<div class="a dt b" style="left:1229px;top:538.61px;width:74px;height:20.67px;line-height:20.67px;transform:scaleX(0.963);transform-origin:100% 50%;text-align:right;padding-right:3px;box-sizing:border-box;">71,15%</div>
<div class="a dt" style="left:27px;top:560.27px;width:85px;height:20.67px;line-height:20.67px;text-align:left;padding-left:3px;box-sizing:border-box;">22.09.2008</div>
<div class="a dt" style="left:112px;top:560.27px;width:63px;height:20.67px;line-height:20.67px;text-align:right;padding-right:2.5px;box-sizing:border-box;">134 030</div>
<div class="a dt" style="left:175px;top:560.27px;width:82px;height:20.67px;line-height:20.67px;text-align:right;padding-right:2.5px;box-sizing:border-box;">0,08336</div>
<div class="a dt" style="left:257px;top:560.27px;width:63px;height:20.67px;line-height:20.67px;text-align:right;padding-right:2.5px;box-sizing:border-box;">134 030</div>
<div class="a dt" style="left:320px;top:560.27px;width:78px;height:20.67px;line-height:20.67px;text-align:right;padding-right:2.5px;box-sizing:border-box;">-0,02173</div>
<div class="a dt" style="left:398px;top:560.27px;width:73px;height:20.67px;line-height:20.67px;text-align:right;padding-right:3px;box-sizing:border-box;">0,090894</div>
<div class="a" style="left:471px;top:558.45px;width:68px;height:20.67px;background:#a2c500"></div>
<div class="a dt b" style="left:471px;top:560.27px;width:68px;height:20.67px;line-height:20.67px;text-align:right;padding-right:2.5px;box-sizing:border-box;">143,43%</div>
<div class="a dt" style="left:539px;top:560.27px;width:74px;height:20.67px;line-height:20.67px;text-align:right;padding-right:3px;box-sizing:border-box;">0,066051</div>
<div class="a" style="left:613px;top:558.45px;width:69px;height:20.67px;background:#a2c500"></div>
<div class="a dt b" style="left:613px;top:560.27px;width:69px;height:20.67px;line-height:20.67px;text-align:right;padding-right:2.5px;box-sizing:border-box;">104,23%</div>
<div class="a dt" style="left:682px;top:560.27px;width:77px;height:20.67px;line-height:20.67px;text-align:right;padding-right:3px;box-sizing:border-box;">0,047960</div>
<div class="a" style="left:759px;top:558.45px;width:69px;height:20.67px;background:#a2c500"></div>
<div class="a dt b" style="left:759px;top:560.27px;width:69px;height:20.67px;line-height:20.67px;text-align:right;padding-right:2.5px;box-sizing:border-box;">75,68%</div>
<div class="a dt" style="left:828px;top:560.27px;width:74px;height:20.67px;line-height:20.67px;text-align:right;padding-right:3px;box-sizing:border-box;">0,035738</div>
<div class="a" style="left:902px;top:558.45px;width:69px;height:20.67px;background:#a2c500"></div>
<div class="a dt b" style="left:902px;top:560.27px;width:69px;height:20.67px;line-height:20.67px;text-align:right;padding-right:2.5px;box-sizing:border-box;">56,39%</div>
<div class="a dt" style="left:971px;top:560.27px;width:72px;height:20.67px;line-height:20.67px;text-align:right;padding-right:3px;box-sizing:border-box;">0,110317</div>
<div class="a" style="left:1043px;top:558.45px;width:69px;height:20.67px;background:#a2c500"></div>
<div class="a dt b" style="left:1043px;top:560.27px;width:69px;height:20.67px;line-height:20.67px;text-align:right;padding-right:2.5px;box-sizing:border-box;">174,08%</div>
<div class="a" style="left:1112px;top:558.45px;width:117px;height:20.67px;background:#ff1c00"></div>
<div class="a dt b" style="left:1112px;top:559.27px;width:117px;height:20.67px;line-height:20.67px;transform:scaleX(0.963);transform-origin:100% 50%;text-align:right;padding-right:3px;box-sizing:border-box;">131,80%</div>
<div class="a" style="left:1229px;top:558.45px;width:74px;height:20.67px;background:#ff1c00"></div>
<div class="a dt b" style="left:1229px;top:559.27px;width:74px;height:20.67px;line-height:20.67px;transform:scaleX(0.963);transform-origin:100% 50%;text-align:right;padding-right:3px;box-sizing:border-box;">61,67%</div>
<div class="a dt" style="left:27px;top:580.94px;width:85px;height:20.67px;line-height:20.67px;text-align:left;padding-left:3px;box-sizing:border-box;">23.09.2008</div>
<div class="a dt" style="left:112px;top:580.94px;width:63px;height:20.67px;line-height:20.67px;text-align:right;padding-right:2.5px;box-sizing:border-box;">133 025</div>
<div class="a dt" style="left:175px;top:580.94px;width:82px;height:20.67px;line-height:20.67px;text-align:right;padding-right:2.5px;box-sizing:border-box;">-0,00753</div>
<div class="a dt" style="left:257px;top:580.94px;width:63px;height:20.67px;line-height:20.67px;text-align:right;padding-right:2.5px;box-sizing:border-box;">133 025</div>
<div class="a dt" style="left:320px;top:580.94px;width:78px;height:20.67px;line-height:20.67px;text-align:right;padding-right:2.5px;box-sizing:border-box;">-0,00753</div>
<div class="a dt" style="left:398px;top:580.94px;width:73px;height:20.67px;line-height:20.67px;text-align:right;padding-right:3px;box-sizing:border-box;">0,090528</div>
<div class="a" style="left:471px;top:579.12px;width:68px;height:20.67px;background:#a2c500"></div>
<div class="a dt b" style="left:471px;top:580.94px;width:68px;height:20.67px;line-height:20.67px;text-align:right;padding-right:2.5px;box-sizing:border-box;">142,85%</div>
<div class="a dt" style="left:539px;top:580.94px;width:74px;height:20.67px;line-height:20.67px;text-align:right;padding-right:3px;box-sizing:border-box;">0,066051</div>
<div class="a" style="left:613px;top:579.12px;width:69px;height:20.67px;background:#a2c500"></div>
<div class="a dt b" style="left:613px;top:580.94px;width:69px;height:20.67px;line-height:20.67px;text-align:right;padding-right:2.5px;box-sizing:border-box;">104,23%</div>
<div class="a dt" style="left:682px;top:580.94px;width:77px;height:20.67px;line-height:20.67px;text-align:right;padding-right:3px;box-sizing:border-box;">0,047954</div>
<div class="a" style="left:759px;top:579.12px;width:69px;height:20.67px;background:#a2c500"></div>
<div class="a dt b" style="left:759px;top:580.94px;width:69px;height:20.67px;line-height:20.67px;text-align:right;padding-right:2.5px;box-sizing:border-box;">75,67%</div>
<div class="a dt" style="left:828px;top:580.94px;width:74px;height:20.67px;line-height:20.67px;text-align:right;padding-right:3px;box-sizing:border-box;">0,035642</div>
<div class="a" style="left:902px;top:579.12px;width:69px;height:20.67px;background:#a2c500"></div>
<div class="a dt b" style="left:902px;top:580.94px;width:69px;height:20.67px;line-height:20.67px;text-align:right;padding-right:2.5px;box-sizing:border-box;">56,24%</div>
<div class="a dt" style="left:971px;top:580.94px;width:72px;height:20.67px;line-height:20.67px;text-align:right;padding-right:3px;box-sizing:border-box;">0,110027</div>
<div class="a" style="left:1043px;top:579.12px;width:69px;height:20.67px;background:#a2c500"></div>
<div class="a dt b" style="left:1043px;top:580.94px;width:69px;height:20.67px;line-height:20.67px;text-align:right;padding-right:2.5px;box-sizing:border-box;">173,62%</div>
<div class="a" style="left:1112px;top:579.12px;width:117px;height:20.67px;background:#ff1c00"></div>
<div class="a dt b" style="left:1112px;top:579.94px;width:117px;height:20.67px;line-height:20.67px;transform:scaleX(0.963);transform-origin:100% 50%;text-align:right;padding-right:3px;box-sizing:border-box;">131,49%</div>
<div class="a" style="left:1229px;top:579.12px;width:74px;height:20.67px;background:#ff1c00"></div>
<div class="a dt b" style="left:1229px;top:579.94px;width:74px;height:20.67px;line-height:20.67px;transform:scaleX(0.963);transform-origin:100% 50%;text-align:right;padding-right:3px;box-sizing:border-box;">68,19%</div>
<div class="a dt" style="left:27px;top:601.61px;width:85px;height:20.67px;line-height:20.67px;text-align:left;padding-left:3px;box-sizing:border-box;">24.09.2008</div>
<div class="a dt" style="left:112px;top:601.61px;width:63px;height:20.67px;line-height:20.67px;text-align:right;padding-right:2.5px;box-sizing:border-box;">134 110</div>
<div class="a dt" style="left:175px;top:601.61px;width:82px;height:20.67px;line-height:20.67px;text-align:right;padding-right:2.5px;box-sizing:border-box;">0,00812</div>
<div class="a dt" style="left:257px;top:601.61px;width:63px;height:20.67px;line-height:20.67px;text-align:right;padding-right:2.5px;box-sizing:border-box;">134 110</div>
<div class="a dt" style="left:320px;top:601.61px;width:78px;height:20.67px;line-height:20.67px;text-align:right;padding-right:2.5px;box-sizing:border-box;">0,00812</div>
<div class="a dt" style="left:398px;top:601.61px;width:73px;height:20.67px;line-height:20.67px;text-align:right;padding-right:3px;box-sizing:border-box;">0,090393</div>
<div class="a" style="left:471px;top:599.79px;width:68px;height:20.67px;background:#a2c500"></div>
<div class="a dt b" style="left:471px;top:601.61px;width:68px;height:20.67px;line-height:20.67px;text-align:right;padding-right:2.5px;box-sizing:border-box;">142,64%</div>
<div class="a dt" style="left:539px;top:601.61px;width:74px;height:20.67px;line-height:20.67px;text-align:right;padding-right:3px;box-sizing:border-box;">0,066026</div>
<div class="a" style="left:613px;top:599.79px;width:69px;height:20.67px;background:#a2c500"></div>
<div class="a dt b" style="left:613px;top:601.61px;width:69px;height:20.67px;line-height:20.67px;text-align:right;padding-right:2.5px;box-sizing:border-box;">104,19%</div>
<div class="a dt" style="left:682px;top:601.61px;width:77px;height:20.67px;line-height:20.67px;text-align:right;padding-right:3px;box-sizing:border-box;">0,047965</div>
<div class="a" style="left:759px;top:599.79px;width:69px;height:20.67px;background:#a2c500"></div>
<div class="a dt b" style="left:759px;top:601.61px;width:69px;height:20.67px;line-height:20.67px;text-align:right;padding-right:2.5px;box-sizing:border-box;">75,69%</div>
<div class="a dt" style="left:828px;top:601.61px;width:74px;height:20.67px;line-height:20.67px;text-align:right;padding-right:3px;box-sizing:border-box;">0,035646</div>
<div class="a" style="left:902px;top:599.79px;width:69px;height:20.67px;background:#a2c500"></div>
<div class="a dt b" style="left:902px;top:601.61px;width:69px;height:20.67px;line-height:20.67px;text-align:right;padding-right:2.5px;box-sizing:border-box;">56,25%</div>
<div class="a dt" style="left:971px;top:601.61px;width:72px;height:20.67px;line-height:20.67px;text-align:right;padding-right:3px;box-sizing:border-box;">0,109960</div>
<div class="a" style="left:1043px;top:599.79px;width:69px;height:20.67px;background:#a2c500"></div>
<div class="a dt b" style="left:1043px;top:601.61px;width:69px;height:20.67px;line-height:20.67px;text-align:right;padding-right:2.5px;box-sizing:border-box;">173,51%</div>
<div class="a" style="left:1112px;top:599.79px;width:117px;height:20.67px;background:#ff1c00"></div>
<div class="a dt b" style="left:1112px;top:600.61px;width:117px;height:20.67px;line-height:20.67px;transform:scaleX(0.963);transform-origin:100% 50%;text-align:right;padding-right:3px;box-sizing:border-box;">131,39%</div>
<div class="a" style="left:1229px;top:599.79px;width:74px;height:20.67px;background:#ff1c00"></div>
<div class="a dt b" style="left:1229px;top:600.61px;width:74px;height:20.67px;line-height:20.67px;transform:scaleX(0.963);transform-origin:100% 50%;text-align:right;padding-right:3px;box-sizing:border-box;">63,35%</div>
<div class="a dt" style="left:27px;top:622.27px;width:85px;height:20.67px;line-height:20.67px;text-align:left;padding-left:3px;box-sizing:border-box;">25.09.2008</div>
<div class="a dt" style="left:112px;top:622.27px;width:63px;height:20.67px;line-height:20.67px;text-align:right;padding-right:2.5px;box-sizing:border-box;">136 020</div>
<div class="a dt" style="left:175px;top:622.27px;width:82px;height:20.67px;line-height:20.67px;text-align:right;padding-right:2.5px;box-sizing:border-box;">0,01414</div>
<div class="a dt" style="left:257px;top:622.27px;width:63px;height:20.67px;line-height:20.67px;text-align:right;padding-right:2.5px;box-sizing:border-box;">136 020</div>
<div class="a dt" style="left:320px;top:622.27px;width:78px;height:20.67px;line-height:20.67px;text-align:right;padding-right:2.5px;box-sizing:border-box;">0,01414</div>
<div class="a dt" style="left:398px;top:622.27px;width:73px;height:20.67px;line-height:20.67px;text-align:right;padding-right:3px;box-sizing:border-box;">0,090494</div>
<div class="a" style="left:471px;top:620.46px;width:68px;height:20.67px;background:#a2c500"></div>
<div class="a dt b" style="left:471px;top:622.27px;width:68px;height:20.67px;line-height:20.67px;text-align:right;padding-right:2.5px;box-sizing:border-box;">142,80%</div>
<div class="a dt" style="left:539px;top:622.27px;width:74px;height:20.67px;line-height:20.67px;text-align:right;padding-right:3px;box-sizing:border-box;">0,066055</div>
<div class="a" style="left:613px;top:620.46px;width:69px;height:20.67px;background:#a2c500"></div>
<div class="a dt b" style="left:613px;top:622.27px;width:69px;height:20.67px;line-height:20.67px;text-align:right;padding-right:2.5px;box-sizing:border-box;">104,23%</div>
<div class="a dt" style="left:682px;top:622.27px;width:77px;height:20.67px;line-height:20.67px;text-align:right;padding-right:3px;box-sizing:border-box;">0,047984</div>
<div class="a" style="left:759px;top:620.46px;width:69px;height:20.67px;background:#a2c500"></div>
<div class="a dt b" style="left:759px;top:622.27px;width:69px;height:20.67px;line-height:20.67px;text-align:right;padding-right:2.5px;box-sizing:border-box;">75,72%</div>
<div class="a dt" style="left:828px;top:622.27px;width:74px;height:20.67px;line-height:20.67px;text-align:right;padding-right:3px;box-sizing:border-box;">0,035656</div>
<div class="a" style="left:902px;top:620.46px;width:69px;height:20.67px;background:#a2c500"></div>
<div class="a dt b" style="left:902px;top:622.27px;width:69px;height:20.67px;line-height:20.67px;text-align:right;padding-right:2.5px;box-sizing:border-box;">56,26%</div>
<div class="a dt" style="left:971px;top:622.27px;width:72px;height:20.67px;line-height:20.67px;text-align:right;padding-right:3px;box-sizing:border-box;">0,110053</div>
<div class="a" style="left:1043px;top:620.46px;width:69px;height:20.67px;background:#a2c500"></div>
<div class="a dt b" style="left:1043px;top:622.27px;width:69px;height:20.67px;line-height:20.67px;text-align:right;padding-right:2.5px;box-sizing:border-box;">173,66%</div>
<div class="a" style="left:1112px;top:620.46px;width:117px;height:20.67px;background:#ff1c00"></div>
<div class="a dt b" style="left:1112px;top:621.27px;width:117px;height:20.67px;line-height:20.67px;transform:scaleX(0.963);transform-origin:100% 50%;text-align:right;padding-right:3px;box-sizing:border-box;">131,50%</div>
<div class="a" style="left:1229px;top:620.46px;width:74px;height:20.67px;background:#ff1c00"></div>
<div class="a dt b" style="left:1229px;top:621.27px;width:74px;height:20.67px;line-height:20.67px;transform:scaleX(0.963);transform-origin:100% 50%;text-align:right;padding-right:3px;box-sizing:border-box;">53,81%</div>
<div class="a dt" style="left:27px;top:642.93px;width:85px;height:20.67px;line-height:20.67px;text-align:left;padding-left:3px;box-sizing:border-box;">26.09.2008</div>
<div class="a dt" style="left:112px;top:642.93px;width:63px;height:20.67px;line-height:20.67px;text-align:right;padding-right:2.5px;box-sizing:border-box;">132 200</div>
<div class="a dt" style="left:175px;top:642.93px;width:82px;height:20.67px;line-height:20.67px;text-align:right;padding-right:2.5px;box-sizing:border-box;">-0,02849</div>
<div class="a dt" style="left:257px;top:642.93px;width:63px;height:20.67px;line-height:20.67px;text-align:right;padding-right:2.5px;box-sizing:border-box;">132 200</div>
<div class="a dt" style="left:320px;top:642.93px;width:78px;height:20.67px;line-height:20.67px;text-align:right;padding-right:2.5px;box-sizing:border-box;">-0,02849</div>
<div class="a dt" style="left:398px;top:642.93px;width:73px;height:20.67px;line-height:20.67px;text-align:right;padding-right:3px;box-sizing:border-box;">0,090481</div>
<div class="a" style="left:471px;top:641.13px;width:68px;height:20.67px;background:#a2c500"></div>
<div class="a dt b" style="left:471px;top:642.93px;width:68px;height:20.67px;line-height:20.67px;text-align:right;padding-right:2.5px;box-sizing:border-box;">142,78%</div>
<div class="a dt" style="left:539px;top:642.93px;width:74px;height:20.67px;line-height:20.67px;text-align:right;padding-right:3px;box-sizing:border-box;">0,066106</div>
<div class="a" style="left:613px;top:641.13px;width:69px;height:20.67px;background:#a2c500"></div>
<div class="a dt b" style="left:613px;top:642.93px;width:69px;height:20.67px;line-height:20.67px;text-align:right;padding-right:2.5px;box-sizing:border-box;">104,31%</div>
<div class="a dt" style="left:682px;top:642.93px;width:77px;height:20.67px;line-height:20.67px;text-align:right;padding-right:3px;box-sizing:border-box;">0,047984</div>
<div class="a" style="left:759px;top:641.13px;width:69px;height:20.67px;background:#a2c500"></div>
<div class="a dt b" style="left:759px;top:642.93px;width:69px;height:20.67px;line-height:20.67px;text-align:right;padding-right:2.5px;box-sizing:border-box;">75,72%</div>
<div class="a dt" style="left:828px;top:642.93px;width:74px;height:20.67px;line-height:20.67px;text-align:right;padding-right:3px;box-sizing:border-box;">0,035695</div>
<div class="a" style="left:902px;top:641.13px;width:69px;height:20.67px;background:#a2c500"></div>
<div class="a dt b" style="left:902px;top:642.93px;width:69px;height:20.67px;line-height:20.67px;text-align:right;padding-right:2.5px;box-sizing:border-box;">56,33%</div>
<div class="a dt" style="left:971px;top:642.93px;width:72px;height:20.67px;line-height:20.67px;text-align:right;padding-right:3px;box-sizing:border-box;">0,109048</div>
<div class="a" style="left:1043px;top:641.13px;width:69px;height:20.67px;background:#a2c500"></div>
<div class="a dt b" style="left:1043px;top:642.93px;width:69px;height:20.67px;line-height:20.67px;text-align:right;padding-right:2.5px;box-sizing:border-box;">172,08%</div>
<div class="a" style="left:1112px;top:641.13px;width:117px;height:20.67px;background:#ff1c00"></div>
<div class="a dt b" style="left:1112px;top:641.93px;width:117px;height:20.67px;line-height:20.67px;transform:scaleX(0.963);transform-origin:100% 50%;text-align:right;padding-right:3px;box-sizing:border-box;">130,96%</div>
<div class="a" style="left:1229px;top:641.13px;width:74px;height:20.67px;background:#ff1c00"></div>
<div class="a dt b" style="left:1229px;top:641.93px;width:74px;height:20.67px;line-height:20.67px;transform:scaleX(0.963);transform-origin:100% 50%;text-align:right;padding-right:3px;box-sizing:border-box;">57,85%</div>
<div class="a dt" style="left:27px;top:663.60px;width:85px;height:20.67px;line-height:20.67px;text-align:left;padding-left:3px;box-sizing:border-box;">29.09.2008</div>
<div class="a dt" style="left:112px;top:663.60px;width:63px;height:20.67px;line-height:20.67px;text-align:right;padding-right:2.5px;box-sizing:border-box;">119 450</div>
<div class="a dt" style="left:175px;top:663.60px;width:82px;height:20.67px;line-height:20.67px;text-align:right;padding-right:2.5px;box-sizing:border-box;">-0,10142</div>
<div class="a dt" style="left:257px;top:663.60px;width:63px;height:20.67px;line-height:20.67px;text-align:right;padding-right:2.5px;box-sizing:border-box;">119 450</div>
<div class="a dt" style="left:320px;top:663.60px;width:78px;height:20.67px;line-height:20.67px;text-align:right;padding-right:2.5px;box-sizing:border-box;">-0,10142</div>
<div class="a dt" style="left:398px;top:663.60px;width:73px;height:20.67px;line-height:20.67px;text-align:right;padding-right:3px;box-sizing:border-box;">0,091960</div>
<div class="a" style="left:471px;top:661.80px;width:68px;height:20.67px;background:#a2c500"></div>
<div class="a dt b" style="left:471px;top:663.60px;width:68px;height:20.67px;line-height:20.67px;text-align:right;padding-right:2.5px;box-sizing:border-box;">145,11%</div>
<div class="a dt" style="left:539px;top:663.60px;width:74px;height:20.67px;line-height:20.67px;text-align:right;padding-right:3px;box-sizing:border-box;">0,067165</div>
<div class="a" style="left:613px;top:661.80px;width:69px;height:20.67px;background:#a2c500"></div>
<div class="a dt b" style="left:613px;top:663.60px;width:69px;height:20.67px;line-height:20.67px;text-align:right;padding-right:2.5px;box-sizing:border-box;">105,98%</div>
<div class="a dt" style="left:682px;top:663.60px;width:77px;height:20.67px;line-height:20.67px;text-align:right;padding-right:3px;box-sizing:border-box;">0,048803</div>
<div class="a" style="left:759px;top:661.80px;width:69px;height:20.67px;background:#a2c500"></div>
<div class="a dt b" style="left:759px;top:663.60px;width:69px;height:20.67px;line-height:20.67px;text-align:right;padding-right:2.5px;box-sizing:border-box;">77,01%</div>
<div class="a dt" style="left:828px;top:663.60px;width:74px;height:20.67px;line-height:20.67px;text-align:right;padding-right:3px;box-sizing:border-box;">0,036234</div>
<div class="a" style="left:902px;top:661.80px;width:69px;height:20.67px;background:#a2c500"></div>
<div class="a dt b" style="left:902px;top:663.60px;width:69px;height:20.67px;line-height:20.67px;text-align:right;padding-right:2.5px;box-sizing:border-box;">57,18%</div>
<div class="a dt" style="left:971px;top:663.60px;width:72px;height:20.67px;line-height:20.67px;text-align:right;padding-right:3px;box-sizing:border-box;">0,110885</div>
<div class="a" style="left:1043px;top:661.80px;width:69px;height:20.67px;background:#a2c500"></div>
<div class="a dt b" style="left:1043px;top:663.60px;width:69px;height:20.67px;line-height:20.67px;text-align:right;padding-right:2.5px;box-sizing:border-box;">174,97%</div>
<div class="a" style="left:1112px;top:661.80px;width:117px;height:20.67px;background:#00d800"></div>
<div class="a dt b" style="left:1112px;top:662.60px;width:117px;height:20.67px;line-height:20.67px;transform:scaleX(0.963);transform-origin:100% 50%;text-align:right;padding-right:3px;box-sizing:border-box;">133,13%</div>
<div class="a" style="left:1229px;top:661.80px;width:74px;height:20.67px;background:#00d800"></div>
<div class="a dt b" style="left:1229px;top:662.60px;width:74px;height:20.67px;line-height:20.67px;transform:scaleX(0.963);transform-origin:100% 50%;text-align:right;padding-right:3px;box-sizing:border-box;">70,69%</div>
<div class="a dt" style="left:27px;top:684.26px;width:85px;height:20.67px;line-height:20.67px;text-align:left;padding-left:3px;box-sizing:border-box;">30.09.2008</div>
<div class="a dt" style="left:112px;top:684.26px;width:63px;height:20.67px;line-height:20.67px;text-align:right;padding-right:2.5px;box-sizing:border-box;">121 610</div>
<div class="a dt" style="left:175px;top:684.26px;width:82px;height:20.67px;line-height:20.67px;text-align:right;padding-right:2.5px;box-sizing:border-box;">0,01792</div>
<div class="a dt" style="left:257px;top:684.26px;width:63px;height:20.67px;line-height:20.67px;text-align:right;padding-right:2.5px;box-sizing:border-box;">121 550</div>
<div class="a dt" style="left:320px;top:684.26px;width:78px;height:20.67px;line-height:20.67px;text-align:right;padding-right:2.5px;box-sizing:border-box;">0,01743</div>
<div class="a dt" style="left:398px;top:684.26px;width:73px;height:20.67px;line-height:20.67px;text-align:right;padding-right:3px;box-sizing:border-box;">0,092136</div>
<div class="a" style="left:471px;top:682.47px;width:68px;height:20.67px;background:#a2c500"></div>
<div class="a dt b" style="left:471px;top:684.26px;width:68px;height:20.67px;line-height:20.67px;text-align:right;padding-right:2.5px;box-sizing:border-box;">145,39%</div>
<div class="a dt" style="left:539px;top:684.26px;width:74px;height:20.67px;line-height:20.67px;text-align:right;padding-right:3px;box-sizing:border-box;">0,067218</div>
<div class="a" style="left:613px;top:682.47px;width:69px;height:20.67px;background:#a2c500"></div>
<div class="a dt b" style="left:613px;top:684.26px;width:69px;height:20.67px;line-height:20.67px;text-align:right;padding-right:2.5px;box-sizing:border-box;">106,07%</div>
<div class="a dt" style="left:682px;top:684.26px;width:77px;height:20.67px;line-height:20.67px;text-align:right;padding-right:3px;box-sizing:border-box;">0,048829</div>
<div class="a" style="left:759px;top:682.47px;width:69px;height:20.67px;background:#a2c500"></div>
<div class="a dt b" style="left:759px;top:684.26px;width:69px;height:20.67px;line-height:20.67px;text-align:right;padding-right:2.5px;box-sizing:border-box;">77,05%</div>
<div class="a dt" style="left:828px;top:684.26px;width:74px;height:20.67px;line-height:20.67px;text-align:right;padding-right:3px;box-sizing:border-box;">0,036222</div>
<div class="a" style="left:902px;top:682.47px;width:69px;height:20.67px;background:#a2c500"></div>
<div class="a dt b" style="left:902px;top:684.26px;width:69px;height:20.67px;line-height:20.67px;text-align:right;padding-right:2.5px;box-sizing:border-box;">57,16%</div>
<div class="a dt" style="left:971px;top:684.26px;width:72px;height:20.67px;line-height:20.67px;text-align:right;padding-right:3px;box-sizing:border-box;">0,110953</div>
<div class="a" style="left:1043px;top:682.47px;width:69px;height:20.67px;background:#a2c500"></div>
<div class="a dt b" style="left:1043px;top:684.26px;width:69px;height:20.67px;line-height:20.67px;text-align:right;padding-right:2.5px;box-sizing:border-box;">175,08%</div>
<div class="a" style="left:1112px;top:682.47px;width:117px;height:20.67px;background:#00d800"></div>
<div class="a dt b" style="left:1112px;top:683.26px;width:117px;height:20.67px;line-height:20.67px;transform:scaleX(0.963);transform-origin:100% 50%;text-align:right;padding-right:3px;box-sizing:border-box;">133,25%</div>
<div class="a" style="left:1229px;top:682.47px;width:74px;height:20.67px;background:#00d800"></div>
<div class="a dt b" style="left:1229px;top:683.26px;width:74px;height:20.67px;line-height:20.67px;transform:scaleX(0.963);transform-origin:100% 50%;text-align:right;padding-right:3px;box-sizing:border-box;">69,79%</div>
<div class="a dt" style="left:27px;top:704.93px;width:85px;height:20.67px;line-height:20.67px;text-align:left;padding-left:3px;box-sizing:border-box;">01.10.2008</div>
<div class="a dt" style="left:112px;top:704.93px;width:63px;height:20.67px;line-height:20.67px;text-align:right;padding-right:2.5px;box-sizing:border-box;">120 115</div>
<div class="a dt" style="left:175px;top:704.93px;width:82px;height:20.67px;line-height:20.67px;text-align:right;padding-right:2.5px;box-sizing:border-box;">-0,01237</div>
<div class="a dt" style="left:257px;top:704.93px;width:63px;height:20.67px;line-height:20.67px;text-align:right;padding-right:2.5px;box-sizing:border-box;">120 115</div>
<div class="a dt" style="left:320px;top:704.93px;width:78px;height:20.67px;line-height:20.67px;text-align:right;padding-right:2.5px;box-sizing:border-box;">-0,01188</div>
<div class="a dt" style="left:398px;top:704.93px;width:73px;height:20.67px;line-height:20.67px;text-align:right;padding-right:3px;box-sizing:border-box;">0,091556</div>
<div class="a" style="left:471px;top:703.14px;width:68px;height:20.67px;background:#a2c500"></div>
<div class="a dt b" style="left:471px;top:704.93px;width:68px;height:20.67px;line-height:20.67px;text-align:right;padding-right:2.5px;box-sizing:border-box;">144,47%</div>
<div class="a dt" style="left:539px;top:704.93px;width:74px;height:20.67px;line-height:20.67px;text-align:right;padding-right:3px;box-sizing:border-box;">0,067216</div>
<div class="a" style="left:613px;top:703.14px;width:69px;height:20.67px;background:#a2c500"></div>
<div class="a dt b" style="left:613px;top:704.93px;width:69px;height:20.67px;line-height:20.67px;text-align:right;padding-right:2.5px;box-sizing:border-box;">106,07%</div>
<div class="a dt" style="left:682px;top:704.93px;width:77px;height:20.67px;line-height:20.67px;text-align:right;padding-right:3px;box-sizing:border-box;">0,048827</div>
<div class="a" style="left:759px;top:703.14px;width:69px;height:20.67px;background:#a2c500"></div>
<div class="a dt b" style="left:759px;top:704.93px;width:69px;height:20.67px;line-height:20.67px;text-align:right;padding-right:2.5px;box-sizing:border-box;">77,05%</div>
<div class="a dt" style="left:828px;top:704.93px;width:74px;height:20.67px;line-height:20.67px;text-align:right;padding-right:3px;box-sizing:border-box;">0,036217</div>
<div class="a" style="left:902px;top:703.14px;width:69px;height:20.67px;background:#a2c500"></div>
<div class="a dt b" style="left:902px;top:704.93px;width:69px;height:20.67px;line-height:20.67px;text-align:right;padding-right:2.5px;box-sizing:border-box;">57,15%</div>
<div class="a dt" style="left:971px;top:704.93px;width:72px;height:20.67px;line-height:20.67px;text-align:right;padding-right:3px;box-sizing:border-box;">0,110910</div>
<div class="a" style="left:1043px;top:703.14px;width:69px;height:20.67px;background:#a2c500"></div>
<div class="a dt b" style="left:1043px;top:704.93px;width:69px;height:20.67px;line-height:20.67px;text-align:right;padding-right:2.5px;box-sizing:border-box;">175,01%</div>
<div class="a" style="left:1112px;top:703.14px;width:117px;height:20.67px;background:#00d800"></div>
<div class="a dt b" style="left:1112px;top:703.93px;width:117px;height:20.67px;line-height:20.67px;transform:scaleX(0.963);transform-origin:100% 50%;text-align:right;padding-right:3px;box-sizing:border-box;">133,00%</div>
<div class="a" style="left:1229px;top:703.14px;width:74px;height:20.67px;background:#00d800"></div>
<div class="a dt b" style="left:1229px;top:703.93px;width:74px;height:20.67px;line-height:20.67px;transform:scaleX(0.963);transform-origin:100% 50%;text-align:right;padding-right:3px;box-sizing:border-box;">68,27%</div>
<div class="a dt" style="left:27px;top:725.60px;width:85px;height:20.67px;line-height:20.67px;text-align:left;padding-left:3px;box-sizing:border-box;">02.10.2008</div>
<div class="a dt" style="left:112px;top:725.60px;width:63px;height:20.67px;line-height:20.67px;text-align:right;padding-right:2.5px;box-sizing:border-box;">115 945</div>
<div class="a dt" style="left:175px;top:725.60px;width:82px;height:20.67px;line-height:20.67px;text-align:right;padding-right:2.5px;box-sizing:border-box;">-0,03533</div>
<div class="a dt" style="left:257px;top:725.60px;width:63px;height:20.67px;line-height:20.67px;text-align:right;padding-right:2.5px;box-sizing:border-box;">115 945</div>
<div class="a dt" style="left:320px;top:725.60px;width:78px;height:20.67px;line-height:20.67px;text-align:right;padding-right:2.5px;box-sizing:border-box;">-0,03533</div>
<div class="a dt" style="left:398px;top:725.60px;width:73px;height:20.67px;line-height:20.67px;text-align:right;padding-right:3px;box-sizing:border-box;">0,091394</div>
<div class="a" style="left:471px;top:723.81px;width:68px;height:20.67px;background:#a2c500"></div>
<div class="a dt b" style="left:471px;top:725.60px;width:68px;height:20.67px;line-height:20.67px;text-align:right;padding-right:2.5px;box-sizing:border-box;">144,22%</div>
<div class="a dt" style="left:539px;top:725.60px;width:74px;height:20.67px;line-height:20.67px;text-align:right;padding-right:3px;box-sizing:border-box;">0,067280</div>
<div class="a" style="left:613px;top:723.81px;width:69px;height:20.67px;background:#a2c500"></div>
<div class="a dt b" style="left:613px;top:725.60px;width:69px;height:20.67px;line-height:20.67px;text-align:right;padding-right:2.5px;box-sizing:border-box;">106,17%</div>
<div class="a dt" style="left:682px;top:725.60px;width:77px;height:20.67px;line-height:20.67px;text-align:right;padding-right:3px;box-sizing:border-box;">0,048882</div>
<div class="a" style="left:759px;top:723.81px;width:69px;height:20.67px;background:#a2c500"></div>
<div class="a dt b" style="left:759px;top:725.60px;width:69px;height:20.67px;line-height:20.67px;text-align:right;padding-right:2.5px;box-sizing:border-box;">77,13%</div>
<div class="a dt" style="left:828px;top:725.60px;width:74px;height:20.67px;line-height:20.67px;text-align:right;padding-right:3px;box-sizing:border-box;">0,036277</div>
<div class="a" style="left:902px;top:723.81px;width:69px;height:20.67px;background:#a2c500"></div>
<div class="a dt b" style="left:902px;top:725.60px;width:69px;height:20.67px;line-height:20.67px;text-align:right;padding-right:2.5px;box-sizing:border-box;">57,24%</div>
<div class="a dt" style="left:971px;top:725.60px;width:72px;height:20.67px;line-height:20.67px;text-align:right;padding-right:3px;box-sizing:border-box;">0,110802</div>
<div class="a" style="left:1043px;top:723.81px;width:69px;height:20.67px;background:#a2c500"></div>
<div class="a dt b" style="left:1043px;top:725.60px;width:69px;height:20.67px;line-height:20.67px;text-align:right;padding-right:2.5px;box-sizing:border-box;">174,84%</div>
<div class="a" style="left:1112px;top:723.81px;width:117px;height:20.67px;background:#00d800"></div>
<div class="a dt b" style="left:1112px;top:724.60px;width:117px;height:20.67px;line-height:20.67px;transform:scaleX(0.963);transform-origin:100% 50%;text-align:right;padding-right:3px;box-sizing:border-box;">132,91%</div>
<div class="a" style="left:1229px;top:723.81px;width:74px;height:20.67px;background:#00d800"></div>
<div class="a dt b" style="left:1229px;top:724.60px;width:74px;height:20.67px;line-height:20.67px;transform:scaleX(0.963);transform-origin:100% 50%;text-align:right;padding-right:3px;box-sizing:border-box;">79,81%</div>
<div class="a dt" style="left:27px;top:746.26px;width:85px;height:20.67px;line-height:20.67px;text-align:left;padding-left:3px;box-sizing:border-box;">03.10.2008</div>
<div class="a dt" style="left:112px;top:746.26px;width:63px;height:20.67px;line-height:20.67px;text-align:right;padding-right:2.5px;box-sizing:border-box;">109 250</div>
<div class="a dt" style="left:175px;top:746.26px;width:82px;height:20.67px;line-height:20.67px;text-align:right;padding-right:2.5px;box-sizing:border-box;">-0,05948</div>
<div class="a dt" style="left:257px;top:746.26px;width:63px;height:20.67px;line-height:20.67px;text-align:right;padding-right:2.5px;box-sizing:border-box;">109 485</div>
<div class="a dt" style="left:320px;top:746.26px;width:78px;height:20.67px;line-height:20.67px;text-align:right;padding-right:2.5px;box-sizing:border-box;">-0,05733</div>
<div class="a dt" style="left:398px;top:746.26px;width:73px;height:20.67px;line-height:20.67px;text-align:right;padding-right:3px;box-sizing:border-box;">0,091685</div>
<div class="a" style="left:471px;top:744.48px;width:68px;height:20.67px;background:#a2c500"></div>
<div class="a dt b" style="left:471px;top:746.26px;width:68px;height:20.67px;line-height:20.67px;text-align:right;padding-right:2.5px;box-sizing:border-box;">144,68%</div>
<div class="a dt" style="left:539px;top:746.26px;width:74px;height:20.67px;line-height:20.67px;text-align:right;padding-right:3px;box-sizing:border-box;">0,067534</div>
<div class="a" style="left:613px;top:744.48px;width:69px;height:20.67px;background:#a2c500"></div>
<div class="a dt b" style="left:613px;top:746.26px;width:69px;height:20.67px;line-height:20.67px;text-align:right;padding-right:2.5px;box-sizing:border-box;">106,57%</div>
<div class="a dt" style="left:682px;top:746.26px;width:77px;height:20.67px;line-height:20.67px;text-align:right;padding-right:3px;box-sizing:border-box;">0,049116</div>
<div class="a" style="left:759px;top:744.48px;width:69px;height:20.67px;background:#a2c500"></div>
<div class="a dt b" style="left:759px;top:746.26px;width:69px;height:20.67px;line-height:20.67px;text-align:right;padding-right:2.5px;box-sizing:border-box;">77,50%</div>
<div class="a dt" style="left:828px;top:746.26px;width:74px;height:20.67px;line-height:20.67px;text-align:right;padding-right:3px;box-sizing:border-box;">0,036438</div>
<div class="a" style="left:902px;top:744.48px;width:69px;height:20.67px;background:#a2c500"></div>
<div class="a dt b" style="left:902px;top:746.26px;width:69px;height:20.67px;line-height:20.67px;text-align:right;padding-right:2.5px;box-sizing:border-box;">57,50%</div>
<div class="a dt" style="left:971px;top:746.26px;width:72px;height:20.67px;line-height:20.67px;text-align:right;padding-right:3px;box-sizing:border-box;">0,111084</div>
<div class="a" style="left:1043px;top:744.48px;width:69px;height:20.67px;background:#a2c500"></div>
<div class="a dt b" style="left:1043px;top:746.26px;width:69px;height:20.67px;line-height:20.67px;text-align:right;padding-right:2.5px;box-sizing:border-box;">175,29%</div>
<div class="a" style="left:1112px;top:744.48px;width:117px;height:20.67px;background:#00d800"></div>
<div class="a dt b" style="left:1112px;top:745.26px;width:117px;height:20.67px;line-height:20.67px;transform:scaleX(0.963);transform-origin:100% 50%;text-align:right;padding-right:3px;box-sizing:border-box;">133,33%</div>
<div class="a" style="left:1229px;top:744.48px;width:74px;height:20.67px;background:#00d800"></div>
<div class="a dt b" style="left:1229px;top:745.26px;width:74px;height:20.67px;line-height:20.67px;transform:scaleX(0.963);transform-origin:100% 50%;text-align:right;padding-right:3px;box-sizing:border-box;">79,99%</div>
<div class="a" style="left:27px;top:269.07px;width:1276px;height:1px;background:#1a1a1a"></div>
<div class="a" style="left:27px;top:289.74px;width:1276px;height:1px;background:#1a1a1a"></div>
<div class="a" style="left:27px;top:310.41px;width:1276px;height:1px;background:#1a1a1a"></div>
<div class="a" style="left:27px;top:331.08px;width:1276px;height:1px;background:#1a1a1a"></div>
<div class="a" style="left:27px;top:351.75px;width:1276px;height:1px;background:#1a1a1a"></div>
<div class="a" style="left:27px;top:372.42px;width:1276px;height:1px;background:#1a1a1a"></div>
<div class="a" style="left:27px;top:393.09px;width:1276px;height:1px;background:#1a1a1a"></div>
<div class="a" style="left:27px;top:413.76px;width:1276px;height:1px;background:#1a1a1a"></div>
<div class="a" style="left:27px;top:434.43px;width:1276px;height:1px;background:#1a1a1a"></div>
<div class="a" style="left:27px;top:455.10px;width:1276px;height:1px;background:#1a1a1a"></div>
<div class="a" style="left:27px;top:475.77px;width:1276px;height:1px;background:#1a1a1a"></div>
<div class="a" style="left:27px;top:496.44px;width:1276px;height:1px;background:#1a1a1a"></div>
<div class="a" style="left:27px;top:517.11px;width:1276px;height:1px;background:#1a1a1a"></div>
<div class="a" style="left:27px;top:537.78px;width:1276px;height:1px;background:#1a1a1a"></div>
<div class="a" style="left:27px;top:558.45px;width:1276px;height:1px;background:#1a1a1a"></div>
<div class="a" style="left:27px;top:579.12px;width:1276px;height:1px;background:#1a1a1a"></div>
<div class="a" style="left:27px;top:599.79px;width:1276px;height:1px;background:#1a1a1a"></div>
<div class="a" style="left:27px;top:620.46px;width:1276px;height:1px;background:#1a1a1a"></div>
<div class="a" style="left:27px;top:641.13px;width:1276px;height:1px;background:#1a1a1a"></div>
<div class="a" style="left:27px;top:661.80px;width:1276px;height:1px;background:#1a1a1a"></div>
<div class="a" style="left:27px;top:682.47px;width:1276px;height:1px;background:#1a1a1a"></div>
<div class="a" style="left:27px;top:703.14px;width:1276px;height:1px;background:#1a1a1a"></div>
<div class="a" style="left:27px;top:723.81px;width:1276px;height:1px;background:#1a1a1a"></div>
<div class="a" style="left:27px;top:744.48px;width:1276px;height:1px;background:#1a1a1a"></div>
<div class="a" style="left:27px;top:765.15px;width:1276px;height:1px;background:#1a1a1a"></div>
<div class="a" style="left:112px;top:248px;width:1px;height:511px;background:#c4c4c4"></div>
<div class="a" style="left:175px;top:248px;width:1.4px;height:511px;background:#c4c4c4"></div>
<div class="a" style="left:257px;top:248px;width:1.6px;height:511px;background:#c4c4c4"></div>
<div class="a" style="left:321px;top:248px;width:1.2px;height:511px;background:#000"></div>
<div class="a" style="left:398px;top:248px;width:1.2px;height:511px;background:#000"></div>
<div class="a" style="left:470px;top:248px;width:1.2px;height:511px;background:#000"></div>
<div class="a" style="left:539px;top:248px;width:1.2px;height:511px;background:#000"></div>
<div class="a" style="left:613px;top:248px;width:1.2px;height:511px;background:#000"></div>
<div class="a" style="left:682px;top:248px;width:1.2px;height:511px;background:#000"></div>
<div class="a" style="left:759px;top:248px;width:1.2px;height:511px;background:#000"></div>
<div class="a" style="left:828px;top:248px;width:1.2px;height:511px;background:#000"></div>
<div class="a" style="left:902px;top:248px;width:1.2px;height:511px;background:#000"></div>
<div class="a" style="left:971px;top:248px;width:1.2px;height:511px;background:#000"></div>
<div class="a" style="left:1043px;top:248px;width:1.2px;height:511px;background:#000"></div>
<div class="a" style="left:1111px;top:248px;width:1px;height:511px;background:rgba(0,0,0,0.6)"></div>
<div class="a" style="left:1228px;top:248px;width:1.2px;height:511px;background:rgba(0,0,0,0.5)"></div>
<div class="a" style="left:1302px;top:248px;width:1px;height:511px;background:rgba(0,0,0,0.45)"></div>
<div class="a" style="left:1112px;top:393.69px;width:117px;height:62.01px;box-sizing:border-box;border:1.4px solid #f0f0f0"></div>
<div class="a" style="left:1227px;top:454.10px;width:3px;height:3px;background:#f0f0f0"></div>
<svg class="a" style="left:448px;top:719px" width="13" height="12" viewBox="0 0 13 12"><path d="M4.5 0.5h4v3.5h4v4h-4v3.5h-4V8h-4V4h4z" fill="#fff" stroke="#000" stroke-width="1.2"/></svg>
<div class="a" style="left:1507px;top:72px;width:12px;height:711px;background:#2b2b2b"></div>
<div class="a" style="left:1510px;top:75px;width:9px;height:10px;background:#454545"></div>
<svg class="a" style="left:1511px;top:77px" width="7" height="5" viewBox="0 0 7 5"><path d="M0 4.5L3.5 0.5L7 4.5z" fill="#bdbdbd"/></svg>
<div class="a" style="left:1511px;top:671px;width:8px;height:16px;background:#575757"></div>
<div class="a" style="left:1510px;top:747px;width:9px;height:11px;background:#454545"></div>
<svg class="a" style="left:1511px;top:750px" width="7" height="5" viewBox="0 0 7 5"><path d="M0 0.5L3.5 4.5L7 0.5z" fill="#bdbdbd"/></svg>
<div class="a" style="left:0px;top:759px;width:1507px;height:24px;background:#262626"></div>
<div class="a" style="left:0px;top:759px;width:1507px;height:2px;background:#1c1c1c"></div>
<svg class="a" style="left:17px;top:766px" width="6" height="9" viewBox="0 0 6 9"><path d="M5 0.5L0.8 4.5L5 8.5z" fill="#8a8a8a"/></svg>
<svg class="a" style="left:39px;top:766px" width="6" height="9" viewBox="0 0 6 9"><path d="M1 0.5L5.2 4.5L1 8.5z" fill="#e0e0e0"/></svg>
<div class="a" style="left:76px;top:764px;width:1px;height:15px;background:#6a6a6a"></div>
<div class="a tb" style="left:88px;top:764.5px;">Ожид. измен</div>
<div class="a" style="left:162px;top:764px;width:1px;height:15px;background:#6a6a6a"></div>
<div class="a tb" style="left:173px;top:764.5px;">Вероятность ITM</div>
<div class="a" style="left:266px;top:764px;width:1px;height:15px;background:#6a6a6a"></div>
<div class="a tb" style="left:275px;top:764.5px;">Веса</div>
<div class="a" style="left:307px;top:759px;width:38px;height:22px;background:#ffffff"></div>
<div class="a" style="left:307px;top:779px;width:38px;height:2px;background:#1d7a5a"></div>
<div class="a tb" style="left:317px;top:764.5px;color:#1e6e5a;font-weight:bold">RTS</div>
<div class="a tb" style="left:355px;top:764.5px;">RTS (рис)</div>
<div class="a" style="left:411px;top:764px;width:1px;height:15px;background:#6a6a6a"></div>
<div class="a tb" style="left:421px;top:764.5px;">GAZR</div>
<div class="a" style="left:458px;top:764px;width:1px;height:15px;background:#6a6a6a"></div>
<div class="a tb" style="left:468px;top:764.5px;">GAZR (рис)</div>
<div class="a" style="left:532px;top:764px;width:1px;height:15px;background:#6a6a6a"></div>
<div class="a tb" style="left:542.5px;top:764.5px;">LKOH</div>
<div class="a" style="left:579.5px;top:764px;width:1px;height:15px;background:#6a6a6a"></div>
<div class="a tb" style="left:589.5px;top:764.5px;">LKOH (рис)</div>
<div class="a" style="left:654px;top:764px;width:1px;height:15px;background:#6a6a6a"></div>
<div class="a tb" style="left:665px;top:764.5px;">SBRF</div>
<div class="a" style="left:697px;top:764px;width:1px;height:15px;background:#6a6a6a"></div>
<div class="a tb" style="left:708px;top:764.5px;">SBRF (рис)</div>
<div class="a" style="left:769px;top:764px;width:1px;height:15px;background:#6a6a6a"></div>
<div class="a tb" style="left:779px;top:764.5px;">VTBR</div>
<div class="a" style="left:815px;top:764px;width:1px;height:15px;background:#6a6a6a"></div>
<div class="a tb" style="left:826px;top:764.5px;width:31px;overflow:hidden;">VTBR (|</div>
<div class="a tb" style="left:865px;top:764.5px;font-weight:bold">...</div>
<svg class="a" style="left:883px;top:763px" width="15" height="15" viewBox="0 0 15 15"><circle cx="7.5" cy="7.5" r="6.3" fill="none" stroke="#e8e8e8" stroke-width="1.3"/><path d="M7.5 4v7M4 7.5h7" stroke="#e8e8e8" stroke-width="1.3"/></svg>
<div class="a" style="left:912px;top:766px;width:2px;height:2px;background:#cfcfcf;box-shadow:0 4px 0 #cfcfcf,0 8px 0 #cfcfcf"></div>
<div class="a" style="left:926px;top:765px;width:581px;height:12px;background:#3a3a3a"></div>
<div class="a" style="left:939px;top:765px;width:536px;height:12px;background:#5c5c5c"></div>
<div class="a" style="left:927px;top:766px;width:11px;height:10px;background:#444"></div>
<svg class="a" style="left:930px;top:768px" width="5" height="7" viewBox="0 0 5 7"><path d="M4.5 0L0.5 3.5L4.5 7z" fill="#8a8a8a"/></svg>
<div class="a" style="left:1494px;top:765px;width:11px;height:11px;background:#4a4a4a"></div>
<svg class="a" style="left:1497px;top:767px" width="5" height="7" viewBox="0 0 5 7"><path d="M0.5 0L4.5 3.5L0.5 7z" fill="#9a9a9a"/></svg>
<div class="a" style="left:1507px;top:759px;width:12px;height:24px;background:#262626"></div>
<div class="a" style="left:0px;top:783px;width:1519px;height:20px;background:#000"></div>
<div class="a" style="left:0px;top:803px;width:1324px;height:11px;background:linear-gradient(#3cbcf2 0,#3cbcf2 1px,#0e86d6 2px,#0b5fb4 11px)"></div>
<div class="a" style="left:1324px;top:803px;width:195px;height:11px;background:#1b202c"></div>
<div class="a" style="left:6px;top:806px;font-size:14.1px;color:#a9c3dd;white-space:nowrap">Урок 14. mp4</div>
<div class="a" style="left:1373px;top:806px;font-size:14px;color:#c8c8c8;white-space:nowrap;letter-spacing:1.0px">00:31:09 / 00:35:51</div></body></html>
